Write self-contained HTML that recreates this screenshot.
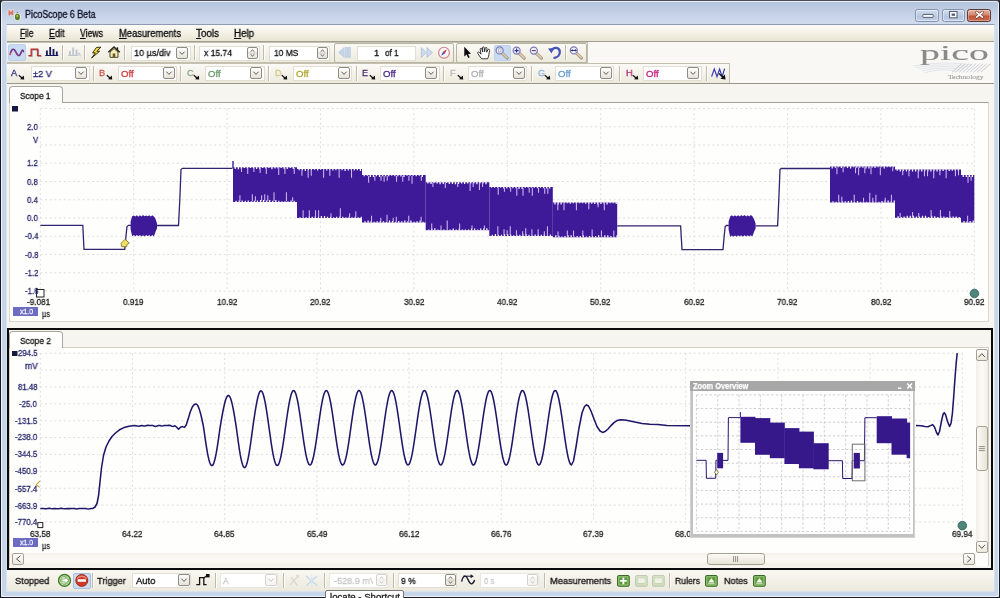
<!DOCTYPE html><html><head><meta charset="utf-8"><title>PicoScope 6 Beta</title><style>
*{box-sizing:border-box;margin:0;padding:0}
html,body{width:1000px;height:598px;overflow:hidden}
body{position:relative;font-family:"Liberation Sans",sans-serif;font-size:10px;color:#000;background:#33333c}
.a{position:absolute}
.t{position:absolute;white-space:nowrap;line-height:1;transform-origin:0 0;-webkit-text-stroke:0.3px;will-change:transform}
#frame{left:0;top:0;width:1000px;height:598px;border:1px solid #1a1a22;border-top-color:#4c4c56;border-radius:4px 4px 0 0;background:linear-gradient(#b3c2da 0,#bccae1 6px,#c6d3e8 14px,#d1dcee 24px,#c7d5ea 44px,#c7d5ea 100%)}
#frameHi{left:1px;top:1px;width:998px;height:596px;border:1px solid rgba(255,255,255,.7);border-radius:3px}
#client{left:7px;top:25px;width:987px;height:566px;background:#f6f5ef}
#clientEdge{left:6px;top:24px;width:989px;height:568px;border:1px solid #d9e2f0;border-top-color:#8f9bb2}
#menubar{left:7px;width:987px;top:25px;height:17px;background:linear-gradient(#fcfbf7,#f4f1e6 50%,#e9e5d4);border-bottom:1px solid #a29e90}
.strip{position:absolute;background:linear-gradient(#fbfaf6,#edeadd);border:1px solid #c4c0b0;border-left:none}
.grp{position:absolute;border:1px solid #b4b1a2;border-radius:2px;background:linear-gradient(#f7f5ee,#ebe8da)}
.inp{position:absolute;background:#fff;border:1px solid #e2dfd2}
.dd{position:absolute;width:12px;height:12px;border:1px solid #8c8b84;border-radius:2px;background:linear-gradient(#fefefc,#e6e3d8)}
.dd svg,.sp svg{position:absolute;left:0;top:0}
.sp{position:absolute;width:11px;height:12px;border:1px solid #8c8b84;border-radius:2px;background:linear-gradient(#fefefc,#e6e3d8)}
.sep{position:absolute;width:1px;background:#bfbcae;box-shadow:1px 0 0 #fdfdfa}
.hl{position:absolute;background:#c9dbf1;border:1px solid #bdd1ec;border-radius:2px}
.panel{position:absolute;background:#fefefd;border:1px solid #d9d6ca;border-top-color:#a3a196}
.tab{position:absolute;background:linear-gradient(#ffffff,#fdfdfb);border:1px solid #a9a799;border-bottom:none;border-radius:4px 4px 0 0}
.dis{opacity:.38}
</style></head><body>
<div class="a" id="frame"></div><div class="a" id="frameHi"></div><div class="a" id="clientEdge"></div><div class="a" id="client"></div>
<div class="t" style="left:24.50px;top:10.23px;font-size:10px;color:#0c0c22;transform:scaleX(0.8868);">PicoScope 6 Beta</div>
<svg class="a" style="left:7px;top:7px" width="16" height="15" viewBox="7 7 16 15"><path d="M9.2 15.4 V10.8 L10.9 14 L12.6 10.6 V15" fill="none" stroke="#f4ecf0" stroke-width="3" stroke-linejoin="round" opacity="0.8"/><path d="M9.2 15.4 V10.8 L10.9 14 L12.6 10.6 V15" fill="none" stroke="#d9766a" stroke-width="1.6" stroke-linejoin="round"/><ellipse cx="17.4" cy="16.8" rx="3.4" ry="4.1" fill="#eef0f4" opacity="0.85"/><ellipse cx="17.4" cy="17" rx="2.5" ry="3.2" fill="#5d7d22"/><ellipse cx="17.2" cy="16" rx="1" ry="1.2" fill="#a9c552"/><path d="M16.6 13 C17.2 12.2,18 12.4,18.4 13.2" fill="none" stroke="#5a5a4a" stroke-width="0.9"/></svg>
<div class="a" style="left:914.5px;top:8.5px;width:24.2px;height:13px;border:1px solid #8493ae;border-radius:2.5px;background:linear-gradient(#d0dcee,#bccbe3 50%,#b1c2dd 51%,#c3d1e6);box-shadow:inset 0 0 0 1px rgba(255,255,255,.45)"></div>
<div class="a" style="left:941.6px;top:8.5px;width:23.8px;height:13px;border:1px solid #8493ae;border-radius:2.5px;background:linear-gradient(#d0dcee,#bccbe3 50%,#b1c2dd 51%,#c3d1e6);box-shadow:inset 0 0 0 1px rgba(255,255,255,.45)"></div>
<div class="a" style="left:967.2px;top:8.5px;width:24.3px;height:13px;border:1px solid #5a3a36;border-radius:2.5px;background:linear-gradient(#e2b0a0,#d48870 45%,#be543c 55%,#cb6e52);box-shadow:inset 0 0 0 1px rgba(255,255,255,.3)"></div>
<svg class="a" style="left:914px;top:8px" width="80" height="15" viewBox="914 8 80 15"><rect x="922.8" y="14.4" width="10.4" height="3" rx="0.8" fill="#fff" stroke="#4d5a73" stroke-width="1"/><rect x="949.6" y="11.4" width="7.4" height="6.4" fill="#fff" stroke="#4d5a73" stroke-width="1"/><rect x="951.6" y="13.6" width="3.4" height="2.2" fill="#4d5a73"/><path d="M976.6 12.4 L982.4 17.2 M982.4 12.4 L976.6 17.2" stroke="#7a3a2e" stroke-width="2.9" stroke-linecap="round"/><path d="M976.6 12.4 L982.4 17.2 M982.4 12.4 L976.6 17.2" stroke="#fff" stroke-width="1.7" stroke-linecap="round"/></svg>
<div class="a" id="menubar"></div>
<div class="t" style="left:19.50px;top:28.83px;font-size:10px;color:#0a0a0a;transform:scaleX(0.8378);text-decoration-thickness:0.7px;text-underline-offset:0.5px;"><u>F</u>ile</div>
<div class="t" style="left:48.50px;top:28.83px;font-size:10px;color:#0a0a0a;transform:scaleX(0.8995);text-decoration-thickness:0.7px;text-underline-offset:0.5px;"><u>E</u>dit</div>
<div class="t" style="left:80.00px;top:28.83px;font-size:10px;color:#0a0a0a;transform:scaleX(0.8681);text-decoration-thickness:0.7px;text-underline-offset:0.5px;"><u>V</u>iews</div>
<div class="t" style="left:119.00px;top:28.83px;font-size:10px;color:#0a0a0a;transform:scaleX(0.9374);text-decoration-thickness:0.7px;text-underline-offset:0.5px;"><u>M</u>easurements</div>
<div class="t" style="left:196.00px;top:28.83px;font-size:10px;color:#0a0a0a;transform:scaleX(0.9852);text-decoration-thickness:0.7px;text-underline-offset:0.5px;"><u>T</u>ools</div>
<div class="t" style="left:234.00px;top:28.83px;font-size:10px;color:#0a0a0a;transform:scaleX(0.9724);text-decoration-thickness:0.7px;text-underline-offset:0.5px;"><u>H</u>elp</div>
<div class="a" style="left:7px;top:42px;width:987px;height:42px;background:#f9f8f4"></div>
<div class="strip" style="left:7px;top:42px;width:581px;height:21px"></div>
<div class="strip" style="left:7px;top:62.6px;width:722.5px;height:21.4px"></div>
<div class="a" style="left:7px;top:83px;width:987px;height:1px;background:#98958a"></div>
<div class="hl" style="left:8px;top:44px;width:18px;height:17px"></div>
<svg class="a" style="left:0;top:42px" width="600" height="22" viewBox="0 42 600 22">
<path d="M9.8 55 C11.4 49,13.6 47.6,15.4 51.4 S19 57.4,20.6 53.4 S22.6 50.4,23.4 50.8" fill="none" stroke="#c8425a" stroke-width="1.5"/>
<path d="M10.6 52.6 C12.2 48,14.4 48.2,16.2 52.6 S19.8 56.6,21.4 52.2 S23 50.6,23.8 52.2" fill="none" stroke="#5a3aa4" stroke-width="1.2"/>
<path d="M28.3 55.6 H31.2 V49.2 H37.6 V55.6 H41" fill="none" stroke="#a58ab4" stroke-width="1.1" transform="translate(0.9,0.7)"/>
<path d="M28.3 55.6 H31.2 V49.2 H37.6 V55.6 H41" fill="none" stroke="#b93434" stroke-width="1.4"/>
<g fill="#17175c"><rect x="46" y="50.5" width="1.8" height="5"/><rect x="49.3" y="47" width="1.8" height="8.5"/><rect x="52.6" y="49" width="1.8" height="6.5"/><rect x="55.9" y="51.5" width="1.8" height="4"/><rect x="45.3" y="55" width="13" height="1"/></g>
<g fill="#bfc3cc"><rect x="69" y="51" width="1.8" height="4.5"/><rect x="72.3" y="47.5" width="1.8" height="8"/><rect x="75.6" y="49.5" width="1.8" height="6"/><rect x="68.3" y="55" width="10" height="1"/><path d="M76 52 l5 5 l-1 -4z" fill="#c9ccd3"/></g>
<path d="M100.9 47.1 L96.4 47.5 L92.6 52.9 L95.4 52.9 L91.6 58 L99.6 51.3 L96.9 51.3 Z" fill="#f4dc3c" stroke="#2e2806" stroke-width="0.95" stroke-linejoin="round"/>
<path d="M108.3 52.3 L114 47 L119.8 52.3" fill="none" stroke="#2a2a1a" stroke-width="1.5"/>
<path d="M110 52 L114 48.6 L118 52 V57.3 H110 Z" fill="#f6eeb6" stroke="#3a3618" stroke-width="0.9"/>
<rect x="112.7" y="53.5" width="2.6" height="3.8" fill="#6a5a2a"/><rect x="116.6" y="47.3" width="1.6" height="3" fill="#2a2a1a"/>
<g fill="#c3d5ea" stroke="#b2c7e0" stroke-width="0.6"><path d="M344.2 47.5 L338.5 52.5 L344.2 57.5 Z"/><rect x="345.6" y="47.5" width="1.9" height="10"/><rect x="348.4" y="47.5" width="1.9" height="10"/></g>
<g fill="#cfdcee" stroke="#a9bfdc" stroke-width="0.8"><path d="M421.4 47.6 L426.2 52.5 L421.4 57.4 Z"/><path d="M427 47.6 L432.4 52.5 L427 57.4 Z"/></g>
<circle cx="444" cy="52.7" r="5.4" fill="#fbf4f4" stroke="#cf7f8d" stroke-width="1.1"/><path d="M446.8 49.6 L444.9 53.6 L443.1 51.8 Z" fill="#c03050"/><path d="M441.2 55.8 L443.1 51.8 L444.9 53.6 Z" fill="#3a4ab0"/>
<path d="M464.3 46.8 V56.6 L466.6 54.5 L468.2 58 L469.7 57.3 L468.1 53.9 L471 53.7 Z" fill="#0a0a0a"/>
<path d="M481.6 58.8 C480 56.8,478.8 55,477.8 53.4 C477.2 52.2,478.6 51.4,479.6 52.5 L481 54.2 L480.2 49.4 C480 48.1,481.6 47.7,481.9 49 L482.7 52 L482.5 47.9 C482.5 46.5,484.2 46.5,484.3 47.9 L484.6 51.7 L485.3 48.2 C485.6 46.9,487.2 47.2,487 48.6 L486.6 52.2 L487.9 49.8 C488.5 48.7,490 49.4,489.6 50.6 C488.9 53.2,489 56.4,487.6 58.8 Z" fill="#fff" stroke="#161616" stroke-width="0.85" stroke-linejoin="round"/>
</svg>
<div class="hl" style="left:493.5px;top:44.5px;width:17.5px;height:16.5px"></div>
<svg class="a" style="left:490px;top:42px" width="110" height="22" viewBox="490 42 110 22">
<path d="M502.0 53.0 L507.20000000000005 58.0" stroke="#9a8a7a" stroke-width="3.1" stroke-linecap="round"/><path d="M502.0 52.8 L507.0 57.6" stroke="#dcc8aa" stroke-width="1.9" stroke-linecap="round"/><circle cx="499.6" cy="50.4" r="3.5" fill="#eef2fb" stroke="#7a7ab4" stroke-width="1.25"/><rect x="498.3" y="48.8" width="2.6" height="3.2" fill="#fff" stroke="#8a9ac4" stroke-width="0.7"/>
<path d="M519.0 53.2 L524.2 58.2" stroke="#9a8a7a" stroke-width="3.1" stroke-linecap="round"/><path d="M519.0 53.0 L524.0 57.800000000000004" stroke="#dcc8aa" stroke-width="1.9" stroke-linecap="round"/><circle cx="516.6" cy="50.6" r="3.5" fill="#eef2fb" stroke="#7a7ab4" stroke-width="1.25"/><path d="M514.6 50.6 H518.6 M516.6 48.6 V52.6" stroke="#3a2a9a" stroke-width="1.2"/>
<path d="M536.1999999999999 53.2 L541.4 58.2" stroke="#9a8a7a" stroke-width="3.1" stroke-linecap="round"/><path d="M536.1999999999999 53.0 L541.1999999999999 57.800000000000004" stroke="#dcc8aa" stroke-width="1.9" stroke-linecap="round"/><circle cx="533.8" cy="50.6" r="3.5" fill="#eef2fb" stroke="#7a7ab4" stroke-width="1.25"/><path d="M531.8 50.6 H535.8" stroke="#7a3a6a" stroke-width="1.2"/>
<path d="M576.1999999999999 53.0 L581.4 58.0" stroke="#9a8a7a" stroke-width="3.1" stroke-linecap="round"/><path d="M576.1999999999999 52.8 L581.1999999999999 57.6" stroke="#dcc8aa" stroke-width="1.9" stroke-linecap="round"/><circle cx="573.8" cy="50.4" r="3.5" fill="#eef2fb" stroke="#7a7ab4" stroke-width="1.25"/><path d="M571.1999999999999 50.4 h5.2" stroke="#2a2a6a" stroke-width="1"/><path d="M571.0 50.4 l1.5 -1.4 v2.8z M576.5999999999999 50.4 l-1.5 -1.4 v2.8z" fill="#2a2a6a"/>
<path d="M551.6 50.6 C553.6 46.6,559.4 46.8,559.8 51.6 C560 55,557.6 57.4,554.4 57.8" fill="none" stroke="#4353b8" stroke-width="2.3" stroke-linecap="round"/><path d="M548 48.6 L553.6 48 L551.6 53.6 Z" fill="#4353b8"/>
</svg>
<div class="sep" style="left:62px;top:45px;height:15px"></div>
<div class="sep" style="left:84px;top:45px;height:15px"></div>
<div class="sep" style="left:124px;top:45px;height:15px"></div>
<div class="sep" style="left:194px;top:45px;height:15px"></div>
<div class="sep" style="left:263px;top:45px;height:15px"></div>
<div class="sep" style="left:565px;top:45px;height:15px"></div>
<div class="inp" style="left:131px;top:45.5px;width:60px;height:15px"></div>
<div class="t" style="left:134.00px;top:48.36px;font-size:9.5px;color:#111;transform:scaleX(0.9552);">10 µs/div</div>
<div class="dd" style="left:176.2px;top:46.5px"><svg width="10" height="10" viewBox="0 0 10 10"><path d="M2.4 3.7 L5 6.4 L7.6 3.7" fill="none" stroke="#505050" stroke-width="0.95"/></svg></div>
<div class="inp" style="left:199px;top:45.5px;width:60.5px;height:15px"></div>
<div class="t" style="left:203.90px;top:48.36px;font-size:9.5px;color:#111;transform:scaleX(0.8953);">x 15.74</div>
<div class="sp" style="left:247px;top:46.8px"><svg width="9" height="10" viewBox="0 0 9 10"><path d="M2.6 3.7 L4.5 2 L6.4 3.7 M2.6 6.3 L4.5 8 L6.4 6.3" fill="none" stroke="#4a4a46" stroke-width="0.9"/><path d="M0 5 H9" stroke="#c9c6ba" stroke-width="0.8"/></svg></div>
<div class="inp" style="left:269px;top:45.5px;width:60.5px;height:15px"></div>
<div class="t" style="left:273.60px;top:48.36px;font-size:9.5px;color:#111;transform:scaleX(0.8850);">10 MS</div>
<div class="sp" style="left:316.5px;top:46.8px"><svg width="9" height="10" viewBox="0 0 9 10"><path d="M2.6 3.7 L4.5 2 L6.4 3.7 M2.6 6.3 L4.5 8 L6.4 6.3" fill="none" stroke="#4a4a46" stroke-width="0.9"/><path d="M0 5 H9" stroke="#c9c6ba" stroke-width="0.8"/></svg></div>
<div class="a" style="left:333.5px;top:43px;width:120.5px;height:19.5px;border:1px solid #b7b4a5;border-radius:2px"></div>
<div class="inp" style="left:356.5px;top:45.5px;width:59.5px;height:15px"></div>
<div class="t" style="left:374.00px;top:48.36px;font-size:9.5px;color:#111;transform:scaleX(0.9842);">1</div>
<div class="t" style="left:384.60px;top:48.36px;font-size:9.5px;color:#111;transform:scaleX(0.8646);">of 1</div>
<div class="a" style="left:456px;top:43px;width:130.5px;height:19.5px;border:1px solid #b7b4a5;border-radius:2px"></div>
<div class="t" style="left:11.40px;top:68.36px;font-size:9.5px;color:#2b2b7c;transform:scaleX(0.9500);">A</div>
<svg class="a" style="left:16.9px;top:72.5px" width="9" height="8" viewBox="0 0 9 8"><path d="M1.8 2.2 L5 5" stroke="#111" stroke-width="1.2"/><path d="M7.2 6.6 L3 6.2 L6.8 2.6 Z" fill="#111"/></svg>
<div class="inp" style="left:30.5px;top:66px;width:59.3px;height:14.5px"></div>
<div class="t" style="left:33.20px;top:69.16px;font-size:9.5px;color:#23236e;transform:scaleX(0.9654);">±2 V</div>
<div class="dd" style="left:75.3px;top:67px"><svg width="10" height="10" viewBox="0 0 10 10"><path d="M2.4 3.7 L5 6.4 L7.6 3.7" fill="none" stroke="#505050" stroke-width="0.95"/></svg></div>
<div class="sep" style="left:92.6px;top:66px;height:15px"></div>
<div class="t" style="left:99.14px;top:68.36px;font-size:9.5px;color:#d05050;transform:scaleX(0.9500);">B</div>
<svg class="a" style="left:104.6px;top:72.5px" width="9" height="8" viewBox="0 0 9 8"><path d="M1.8 2.2 L5 5" stroke="#111" stroke-width="1.2"/><path d="M7.2 6.6 L3 6.2 L6.8 2.6 Z" fill="#111"/></svg>
<div class="inp" style="left:117.9px;top:66px;width:59.3px;height:14.5px"></div>
<div class="t" style="left:120.94px;top:69.16px;font-size:9.5px;color:#d03a3a;transform:scaleX(1.0083);">Off</div>
<div class="dd" style="left:162.7px;top:67px"><svg width="10" height="10" viewBox="0 0 10 10"><path d="M2.4 3.7 L5 6.4 L7.6 3.7" fill="none" stroke="#505050" stroke-width="0.95"/></svg></div>
<div class="sep" style="left:180.3px;top:66px;height:15px"></div>
<div class="t" style="left:186.88px;top:68.36px;font-size:9.5px;color:#8aa58a;transform:scaleX(0.9500);">C</div>
<svg class="a" style="left:192.4px;top:72.5px" width="9" height="8" viewBox="0 0 9 8"><path d="M1.8 2.2 L5 5" stroke="#111" stroke-width="1.2"/><path d="M7.2 6.6 L3 6.2 L6.8 2.6 Z" fill="#111"/></svg>
<div class="inp" style="left:205.4px;top:66px;width:59.3px;height:14.5px"></div>
<div class="t" style="left:208.38px;top:69.16px;font-size:9.5px;color:#6c9a6c;transform:scaleX(1.0083);">Off</div>
<div class="dd" style="left:250.2px;top:67px"><svg width="10" height="10" viewBox="0 0 10 10"><path d="M2.4 3.7 L5 6.4 L7.6 3.7" fill="none" stroke="#505050" stroke-width="0.95"/></svg></div>
<div class="sep" style="left:267.9px;top:66px;height:15px"></div>
<div class="t" style="left:274.62px;top:68.36px;font-size:9.5px;color:#cfc88a;transform:scaleX(0.9500);">D</div>
<svg class="a" style="left:280.1px;top:72.5px" width="9" height="8" viewBox="0 0 9 8"><path d="M1.8 2.2 L5 5" stroke="#111" stroke-width="1.2"/><path d="M7.2 6.6 L3 6.2 L6.8 2.6 Z" fill="#111"/></svg>
<div class="inp" style="left:292.8px;top:66px;width:59.3px;height:14.5px"></div>
<div class="t" style="left:295.82px;top:69.16px;font-size:9.5px;color:#b4a636;transform:scaleX(1.0083);">Off</div>
<div class="dd" style="left:337.6px;top:67px"><svg width="10" height="10" viewBox="0 0 10 10"><path d="M2.4 3.7 L5 6.4 L7.6 3.7" fill="none" stroke="#505050" stroke-width="0.95"/></svg></div>
<div class="sep" style="left:355.6px;top:66px;height:15px"></div>
<div class="t" style="left:362.36px;top:68.36px;font-size:9.5px;color:#4b2d78;transform:scaleX(0.9500);">E</div>
<svg class="a" style="left:367.9px;top:72.5px" width="9" height="8" viewBox="0 0 9 8"><path d="M1.8 2.2 L5 5" stroke="#111" stroke-width="1.2"/><path d="M7.2 6.6 L3 6.2 L6.8 2.6 Z" fill="#111"/></svg>
<div class="inp" style="left:380.3px;top:66px;width:59.3px;height:14.5px"></div>
<div class="t" style="left:383.26px;top:69.16px;font-size:9.5px;color:#4a2a86;transform:scaleX(1.0083);">Off</div>
<div class="dd" style="left:425.1px;top:67px"><svg width="10" height="10" viewBox="0 0 10 10"><path d="M2.4 3.7 L5 6.4 L7.6 3.7" fill="none" stroke="#505050" stroke-width="0.95"/></svg></div>
<div class="sep" style="left:443.2px;top:66px;height:15px"></div>
<div class="t" style="left:450.10px;top:68.36px;font-size:9.5px;color:#b9b9b9;transform:scaleX(0.9500);">F</div>
<svg class="a" style="left:455.6px;top:72.5px" width="9" height="8" viewBox="0 0 9 8"><path d="M1.8 2.2 L5 5" stroke="#111" stroke-width="1.2"/><path d="M7.2 6.6 L3 6.2 L6.8 2.6 Z" fill="#111"/></svg>
<div class="inp" style="left:467.7px;top:66px;width:59.3px;height:14.5px"></div>
<div class="t" style="left:470.70px;top:69.16px;font-size:9.5px;color:#b0b0b0;transform:scaleX(1.0083);">Off</div>
<div class="dd" style="left:512.5px;top:67px"><svg width="10" height="10" viewBox="0 0 10 10"><path d="M2.4 3.7 L5 6.4 L7.6 3.7" fill="none" stroke="#505050" stroke-width="0.95"/></svg></div>
<div class="sep" style="left:530.9px;top:66px;height:15px"></div>
<div class="t" style="left:537.84px;top:68.36px;font-size:9.5px;color:#8ab2dc;transform:scaleX(0.9500);">G</div>
<svg class="a" style="left:543.3px;top:72.5px" width="9" height="8" viewBox="0 0 9 8"><path d="M1.8 2.2 L5 5" stroke="#111" stroke-width="1.2"/><path d="M7.2 6.6 L3 6.2 L6.8 2.6 Z" fill="#111"/></svg>
<div class="inp" style="left:555.1px;top:66px;width:59.3px;height:14.5px"></div>
<div class="t" style="left:558.14px;top:69.16px;font-size:9.5px;color:#6a9cd4;transform:scaleX(1.0083);">Off</div>
<div class="dd" style="left:599.9px;top:67px"><svg width="10" height="10" viewBox="0 0 10 10"><path d="M2.4 3.7 L5 6.4 L7.6 3.7" fill="none" stroke="#505050" stroke-width="0.95"/></svg></div>
<div class="sep" style="left:618.6px;top:66px;height:15px"></div>
<div class="t" style="left:625.58px;top:68.36px;font-size:9.5px;color:#b32672;transform:scaleX(0.9500);">H</div>
<svg class="a" style="left:631.1px;top:72.5px" width="9" height="8" viewBox="0 0 9 8"><path d="M1.8 2.2 L5 5" stroke="#111" stroke-width="1.2"/><path d="M7.2 6.6 L3 6.2 L6.8 2.6 Z" fill="#111"/></svg>
<div class="inp" style="left:642.6px;top:66px;width:59.3px;height:14.5px"></div>
<div class="t" style="left:645.58px;top:69.16px;font-size:9.5px;color:#c3207e;transform:scaleX(1.0083);">Off</div>
<div class="dd" style="left:687.4px;top:67px"><svg width="10" height="10" viewBox="0 0 10 10"><path d="M2.4 3.7 L5 6.4 L7.6 3.7" fill="none" stroke="#505050" stroke-width="0.95"/></svg></div>
<div class="sep" style="left:706.2px;top:66px;height:15px"></div>
<svg class="a" style="left:710px;top:66px" width="18" height="15" viewBox="710 66 18 15"><path d="M711.6 76.6 L714.3 69 L717 76.6 L719.6 69 L722.2 76.6 L724.6 68.6" fill="none" stroke="#3a3ab0" stroke-width="1.2"/><path d="M719 73.5 L723 77.3" stroke="#111" stroke-width="1.4"/><path d="M725.6 79.6 L720.4 78.8 L724.8 74.4 Z" fill="#111"/></svg>
<svg class="a" style="left:905px;top:58px" width="90" height="20" viewBox="905 58 90 20">
<path d="M913 66.0 C935 62.5,950 62.0,972 65.0" fill="none" stroke="#dfe3ea" stroke-width="0.9"/>
<path d="M916 67.7 C935 64.2,950 63.7,968 66.7" fill="none" stroke="#dfe3ea" stroke-width="0.9"/>
<path d="M919 69.4 C935 65.9,950 65.4,964 68.4" fill="none" stroke="#dfe3ea" stroke-width="0.9"/>
<path d="M922 71.1 C935 67.6,950 67.1,960 70.1" fill="none" stroke="#dfe3ea" stroke-width="0.9"/>
<path d="M925 72.8 C935 69.3,950 68.8,956 71.8" fill="none" stroke="#dfe3ea" stroke-width="0.9"/>
<path d="M952.0 72.3 L961.5 63.8" stroke="#c3c6cf" stroke-width="0.9"/>
<path d="M955.6 72.3 L965.1 63.8" stroke="#c3c6cf" stroke-width="0.9"/>
<path d="M959.2 72.3 L968.7 63.8" stroke="#c3c6cf" stroke-width="0.9"/>
<path d="M962.8 72.3 L972.3 63.8" stroke="#c3c6cf" stroke-width="0.9"/>
<path d="M966.4 72.3 L975.9 63.8" stroke="#c3c6cf" stroke-width="0.9"/>
<path d="M970.0 72.3 L979.5 63.8" stroke="#c3c6cf" stroke-width="0.9"/>
<path d="M973.6 72.3 L983.1 63.8" stroke="#c3c6cf" stroke-width="0.9"/>
<path d="M977.2 72.3 L986.7 63.8" stroke="#c3c6cf" stroke-width="0.9"/>
<path d="M980.8 72.3 L990.3 63.8" stroke="#c3c6cf" stroke-width="0.9"/>
</svg>
<div class="t" style="left:919.6px;top:42.8px;font-family:'Liberation Serif',serif;font-size:21px;letter-spacing:0.1px;color:#8a8a8a;transform:scaleX(1.89);-webkit-text-stroke:0.1px">pico</div>
<div class="t" style="left:948.20px;top:73.87px;font-size:6.6px;color:#9c9c9c;font-family:'Liberation Serif',serif;transform:scaleX(1.1461);-webkit-text-stroke:0.1px">Technology</div>
<div class="panel" style="left:9px;top:102px;width:980px;height:220px"></div>
<div class="tab" style="left:9px;top:86px;width:54px;height:17px"></div>
<div class="t" style="left:19.50px;top:91.26px;font-size:9.5px;color:#141414;transform:scaleX(0.8749);">Scope 1</div>
<div class="a" style="left:7px;top:328px;width:986px;height:242.3px;border:2px solid #0a0a0a;background:#f6f5ef"></div>
<div class="panel" style="left:9px;top:347px;width:980px;height:219px;border-color:#d2cfc2"></div>
<div class="tab" style="left:9px;top:331px;width:54px;height:17px"></div>
<div class="t" style="left:19.50px;top:335.76px;font-size:9.5px;color:#141414;transform:scaleX(0.8893);">Scope 2</div>
<svg class="a" style="left:0;top:0" width="1000" height="598" viewBox="0 0 1000 598">
<g stroke="#dedee4" stroke-width="1" stroke-dasharray="2 2.7" fill="none"><line x1="40.30" y1="108.5" x2="40.30" y2="291.0"/><line x1="40.3" y1="108.50" x2="974.3" y2="108.50"/><line x1="133.70" y1="108.5" x2="133.70" y2="291.0"/><line x1="40.3" y1="126.75" x2="974.3" y2="126.75"/><line x1="227.10" y1="108.5" x2="227.10" y2="291.0"/><line x1="40.3" y1="145.00" x2="974.3" y2="145.00"/><line x1="320.50" y1="108.5" x2="320.50" y2="291.0"/><line x1="40.3" y1="163.25" x2="974.3" y2="163.25"/><line x1="413.90" y1="108.5" x2="413.90" y2="291.0"/><line x1="40.3" y1="181.50" x2="974.3" y2="181.50"/><line x1="507.30" y1="108.5" x2="507.30" y2="291.0"/><line x1="40.3" y1="199.75" x2="974.3" y2="199.75"/><line x1="600.70" y1="108.5" x2="600.70" y2="291.0"/><line x1="40.3" y1="218.00" x2="974.3" y2="218.00"/><line x1="694.10" y1="108.5" x2="694.10" y2="291.0"/><line x1="40.3" y1="236.25" x2="974.3" y2="236.25"/><line x1="787.50" y1="108.5" x2="787.50" y2="291.0"/><line x1="40.3" y1="254.50" x2="974.3" y2="254.50"/><line x1="880.90" y1="108.5" x2="880.90" y2="291.0"/><line x1="40.3" y1="272.75" x2="974.3" y2="272.75"/><line x1="974.30" y1="108.5" x2="974.30" y2="291.0"/><line x1="40.3" y1="291.00" x2="974.3" y2="291.00"/></g>
<g stroke="#dedee4" stroke-width="1" stroke-dasharray="2 2.7" fill="none"><line x1="40.30" y1="353.2" x2="40.30" y2="522.0"/><line x1="40.3" y1="353.20" x2="962.3" y2="353.20"/><line x1="132.50" y1="353.2" x2="132.50" y2="522.0"/><line x1="40.3" y1="370.08" x2="962.3" y2="370.08"/><line x1="224.70" y1="353.2" x2="224.70" y2="522.0"/><line x1="40.3" y1="386.96" x2="962.3" y2="386.96"/><line x1="316.90" y1="353.2" x2="316.90" y2="522.0"/><line x1="40.3" y1="403.84" x2="962.3" y2="403.84"/><line x1="409.10" y1="353.2" x2="409.10" y2="522.0"/><line x1="40.3" y1="420.72" x2="962.3" y2="420.72"/><line x1="501.30" y1="353.2" x2="501.30" y2="522.0"/><line x1="40.3" y1="437.60" x2="962.3" y2="437.60"/><line x1="593.50" y1="353.2" x2="593.50" y2="522.0"/><line x1="40.3" y1="454.48" x2="962.3" y2="454.48"/><line x1="685.70" y1="353.2" x2="685.70" y2="522.0"/><line x1="40.3" y1="471.36" x2="962.3" y2="471.36"/><line x1="777.90" y1="353.2" x2="777.90" y2="522.0"/><line x1="40.3" y1="488.24" x2="962.3" y2="488.24"/><line x1="870.10" y1="353.2" x2="870.10" y2="522.0"/><line x1="40.3" y1="505.12" x2="962.3" y2="505.12"/><line x1="962.30" y1="353.2" x2="962.30" y2="522.0"/><line x1="40.3" y1="522.00" x2="962.3" y2="522.00"/></g>
<path d="M40.3 225.3 L82.8 225.3 L84.0 249.3 L124.8 249.3 L126.0 236.0 L127.0 226.5 L128.5 225.3 L131.0 225.3" fill="none" stroke="#33226f" stroke-width="1.3"/>
<path d="M156.5 225.5 L178.5 225.5 L179.8 200.0 L181.0 169.5 L182.5 168.3 L232.5 168.3" fill="none" stroke="#33226f" stroke-width="1.3"/>
<path d="M617.2 225.8 L680.6 225.8 L682.0 249.6 L723.0 249.6 L724.2 236.0 L725.2 226.5 L726.5 225.5 L728.8 225.5" fill="none" stroke="#33226f" stroke-width="1.3"/>
<path d="M755.5 225.8 L777.6 225.8 L778.8 200.0 L780.0 169.5 L781.2 168.5 L830.0 168.5" fill="none" stroke="#33226f" stroke-width="1.3"/>
<path d="M130.6 221.5 L132.2 216.3 L133.7 215.4 L135.3 216.6 L136.8 215.3 L138.4 216.7 L139.9 215.2 L141.5 216.6 L143.0 215.1 L144.6 216.3 L146.1 215.4 L147.7 216.3 L149.2 215.3 L150.8 216.5 L152.3 215.3 L153.9 216.6 L155.4 218.6 L157.0 223.5 L157.0 228.5 L155.4 232.1 L153.9 236.5 L152.3 235.0 L150.8 236.5 L149.2 234.9 L147.7 236.3 L146.1 234.9 L144.6 236.6 L143.0 235.3 L141.5 236.4 L139.9 235.1 L138.4 236.3 L136.8 235.0 L135.3 236.3 L133.7 235.1 L132.2 236.3 L130.6 229.5Z" fill="#3f1a98"/>
<path d="M728.6 221.5 L730.2 216.5 L731.8 215.2 L733.4 216.6 L735.0 215.3 L736.5 216.5 L738.1 215.2 L739.7 216.4 L741.3 215.0 L742.9 216.2 L744.5 215.1 L746.1 216.5 L747.7 215.2 L749.2 216.5 L750.8 215.1 L752.4 216.2 L754.0 218.9 L755.6 223.5 L755.6 228.5 L754.0 232.1 L752.4 236.5 L750.8 235.3 L749.2 236.5 L747.7 235.3 L746.1 236.5 L744.5 235.2 L742.9 236.7 L741.3 235.3 L739.7 236.6 L738.1 235.2 L736.5 236.7 L735.0 235.5 L733.4 236.8 L731.8 235.4 L730.2 236.9 L728.6 229.7Z" fill="#3f1a98"/>
<rect x="233" y="167.3" width="64.0" height="34.7" fill="#3f1a98"/>
<path d="M234.6 167.1 v1.8 h1.25 v-1.8zM237.7 167.1 v2.2 h1.25 v-2.2zM240.7 167.1 v1.8 h1.25 v-1.8zM243.8 167.1 v1.0 h1.25 v-1.0zM246.8 167.1 v1.4 h1.25 v-1.4zM249.9 167.1 v1.0 h1.25 v-1.0zM253.0 167.1 v1.4 h1.25 v-1.4zM256.0 167.1 v1.8 h1.25 v-1.8zM259.1 167.1 v2.2 h1.25 v-2.2zM262.1 167.1 v1.0 h1.25 v-1.0zM265.2 167.1 v1.4 h1.25 v-1.4zM268.3 167.1 v1.0 h1.25 v-1.0zM271.3 167.1 v2.2 h1.25 v-2.2zM274.4 167.1 v1.4 h1.25 v-1.4zM277.4 167.1 v1.4 h1.25 v-1.4zM280.5 167.1 v1.0 h1.25 v-1.0zM283.6 167.1 v1.8 h1.25 v-1.8zM286.6 167.1 v1.8 h1.25 v-1.8zM289.7 167.1 v1.0 h1.25 v-1.0zM292.7 167.1 v1.8 h1.25 v-1.8zM235.4 202.2 v-1.4 h1.25 v1.4zM238.5 202.2 v-1.8 h1.25 v1.8zM241.5 202.2 v-1.8 h1.25 v1.8zM244.6 202.2 v-1.4 h1.25 v1.4zM247.6 202.2 v-1.8 h1.25 v1.8zM250.7 202.2 v-1.0 h1.25 v1.0zM253.8 202.2 v-1.4 h1.25 v1.4zM256.8 202.2 v-1.8 h1.25 v1.8zM259.9 202.2 v-2.2 h1.25 v2.2zM262.9 202.2 v-2.2 h1.25 v2.2zM266.0 202.2 v-1.8 h1.25 v1.8zM269.1 202.2 v-2.2 h1.25 v2.2zM272.1 202.2 v-1.4 h1.25 v1.4zM275.2 202.2 v-2.2 h1.25 v2.2zM278.2 202.2 v-1.4 h1.25 v1.4zM281.3 202.2 v-1.0 h1.25 v1.0zM284.4 202.2 v-1.0 h1.25 v1.0zM287.4 202.2 v-1.0 h1.25 v1.0zM290.5 202.2 v-1.8 h1.25 v1.8zM293.5 202.2 v-1.4 h1.25 v1.4z" fill="#fdfcff"/>
<path d="M241.0 168.1 v4 h1.05 v-4zM247.2 168.1 v6 h1.05 v-6zM253.4 168.1 v4 h1.05 v-4zM259.6 168.1 v5 h1.05 v-5zM265.8 168.1 v6 h1.05 v-6zM278.2 168.1 v7 h1.05 v-7zM284.4 168.1 v6 h1.05 v-6zM293.7 168.1 v6 h1.05 v-6zM239.4 201.2 v-6 h1.05 v6zM251.8 201.2 v-7 h1.05 v7zM254.9 201.2 v-5 h1.05 v5zM261.1 201.2 v-6 h1.05 v6zM264.2 201.2 v-7 h1.05 v7zM267.3 201.2 v-6 h1.05 v6zM273.5 201.2 v-9 h1.05 v9zM285.9 201.2 v-9 h1.05 v9zM292.1 201.2 v-4 h1.05 v4z" fill="#cdb9f0"/>
<rect x="297" y="169" width="65.0" height="49.0" fill="#3f1a98"/>
<path d="M298.6 168.8 v1.4 h1.25 v-1.4zM301.7 168.8 v1.4 h1.25 v-1.4zM304.7 168.8 v2.2 h1.25 v-2.2zM307.8 168.8 v1.4 h1.25 v-1.4zM310.8 168.8 v1.4 h1.25 v-1.4zM313.9 168.8 v1.0 h1.25 v-1.0zM317.0 168.8 v1.8 h1.25 v-1.8zM320.0 168.8 v1.0 h1.25 v-1.0zM323.1 168.8 v1.0 h1.25 v-1.0zM326.1 168.8 v1.8 h1.25 v-1.8zM329.2 168.8 v1.4 h1.25 v-1.4zM332.3 168.8 v1.8 h1.25 v-1.8zM335.3 168.8 v1.4 h1.25 v-1.4zM338.4 168.8 v1.0 h1.25 v-1.0zM341.4 168.8 v1.4 h1.25 v-1.4zM344.5 168.8 v2.2 h1.25 v-2.2zM347.6 168.8 v1.8 h1.25 v-1.8zM350.6 168.8 v1.4 h1.25 v-1.4zM353.7 168.8 v1.8 h1.25 v-1.8zM356.7 168.8 v1.4 h1.25 v-1.4zM359.8 168.8 v2.2 h1.25 v-2.2zM299.4 218.2 v-1.0 h1.25 v1.0zM302.5 218.2 v-1.0 h1.25 v1.0zM305.5 218.2 v-1.0 h1.25 v1.0zM308.6 218.2 v-1.8 h1.25 v1.8zM311.6 218.2 v-1.4 h1.25 v1.4zM314.7 218.2 v-2.2 h1.25 v2.2zM317.8 218.2 v-1.4 h1.25 v1.4zM320.8 218.2 v-2.2 h1.25 v2.2zM323.9 218.2 v-2.2 h1.25 v2.2zM326.9 218.2 v-1.4 h1.25 v1.4zM330.0 218.2 v-1.4 h1.25 v1.4zM333.1 218.2 v-1.0 h1.25 v1.0zM336.1 218.2 v-1.4 h1.25 v1.4zM339.2 218.2 v-1.8 h1.25 v1.8zM342.2 218.2 v-1.4 h1.25 v1.4zM345.3 218.2 v-1.0 h1.25 v1.0zM348.4 218.2 v-1.4 h1.25 v1.4zM351.4 218.2 v-1.0 h1.25 v1.0zM354.5 218.2 v-1.4 h1.25 v1.4zM357.5 218.2 v-1.0 h1.25 v1.0zM360.6 218.2 v-1.4 h1.25 v1.4z" fill="#fdfcff"/>
<path d="M301.4 169.8 v6 h1.05 v-6zM307.6 169.8 v8 h1.05 v-8zM310.7 169.8 v6 h1.05 v-6zM323.1 169.8 v8 h1.05 v-8zM329.3 169.8 v6 h1.05 v-6zM338.6 169.8 v8 h1.05 v-8zM351.0 169.8 v8 h1.05 v-8zM302.6 217.2 v-7 h1.05 v7zM308.8 217.2 v-7 h1.05 v7zM315.0 217.2 v-7 h1.05 v7zM318.1 217.2 v-7 h1.05 v7zM330.5 217.2 v-4 h1.05 v4zM339.8 217.2 v-9 h1.05 v9zM349.1 217.2 v-4 h1.05 v4zM355.3 217.2 v-6 h1.05 v6z" fill="#cdb9f0"/>
<rect x="362" y="175" width="63.7" height="47.5" fill="#3f1a98"/>
<path d="M363.6 174.8 v1.4 h1.25 v-1.4zM366.7 174.8 v1.0 h1.25 v-1.0zM369.7 174.8 v2.2 h1.25 v-2.2zM372.8 174.8 v2.2 h1.25 v-2.2zM375.8 174.8 v1.4 h1.25 v-1.4zM378.9 174.8 v2.2 h1.25 v-2.2zM382.0 174.8 v1.4 h1.25 v-1.4zM385.0 174.8 v1.4 h1.25 v-1.4zM388.1 174.8 v1.4 h1.25 v-1.4zM391.1 174.8 v1.0 h1.25 v-1.0zM394.2 174.8 v1.4 h1.25 v-1.4zM397.3 174.8 v1.4 h1.25 v-1.4zM400.3 174.8 v1.8 h1.25 v-1.8zM403.4 174.8 v2.2 h1.25 v-2.2zM406.4 174.8 v1.0 h1.25 v-1.0zM409.5 174.8 v1.0 h1.25 v-1.0zM412.6 174.8 v1.0 h1.25 v-1.0zM415.6 174.8 v1.4 h1.25 v-1.4zM418.7 174.8 v1.0 h1.25 v-1.0zM421.7 174.8 v2.2 h1.25 v-2.2zM364.4 222.7 v-1.4 h1.25 v1.4zM367.5 222.7 v-2.2 h1.25 v2.2zM370.5 222.7 v-1.8 h1.25 v1.8zM373.6 222.7 v-1.0 h1.25 v1.0zM376.6 222.7 v-1.4 h1.25 v1.4zM379.7 222.7 v-1.8 h1.25 v1.8zM382.8 222.7 v-1.4 h1.25 v1.4zM385.8 222.7 v-1.0 h1.25 v1.0zM388.9 222.7 v-2.2 h1.25 v2.2zM391.9 222.7 v-1.8 h1.25 v1.8zM395.0 222.7 v-1.0 h1.25 v1.0zM398.1 222.7 v-1.8 h1.25 v1.8zM401.1 222.7 v-1.4 h1.25 v1.4zM404.2 222.7 v-2.2 h1.25 v2.2zM407.2 222.7 v-1.4 h1.25 v1.4zM410.3 222.7 v-2.2 h1.25 v2.2zM413.4 222.7 v-1.0 h1.25 v1.0zM416.4 222.7 v-1.4 h1.25 v1.4zM419.5 222.7 v-2.2 h1.25 v2.2zM422.5 222.7 v-1.0 h1.25 v1.0z" fill="#fdfcff"/>
<path d="M368.1 175.8 v7 h1.05 v-7zM374.3 175.8 v5 h1.05 v-5zM380.5 175.8 v5 h1.05 v-5zM383.6 175.8 v6 h1.05 v-6zM386.7 175.8 v5 h1.05 v-5zM396.0 175.8 v6 h1.05 v-6zM402.2 175.8 v6 h1.05 v-6zM408.4 175.8 v5 h1.05 v-5zM411.5 175.8 v8 h1.05 v-8zM420.8 175.8 v5 h1.05 v-5zM371.0 221.7 v-6 h1.05 v6zM380.3 221.7 v-4 h1.05 v4zM386.5 221.7 v-7 h1.05 v7zM392.7 221.7 v-4 h1.05 v4zM395.8 221.7 v-5 h1.05 v5zM408.2 221.7 v-6 h1.05 v6zM420.6 221.7 v-5 h1.05 v5z" fill="#cdb9f0"/>
<rect x="425.7" y="182.3" width="63.6" height="47.9" fill="#3f1a98"/>
<path d="M427.3 182.1 v1.4 h1.25 v-1.4zM430.4 182.1 v1.8 h1.25 v-1.8zM433.4 182.1 v1.0 h1.25 v-1.0zM436.5 182.1 v1.4 h1.25 v-1.4zM439.5 182.1 v2.2 h1.25 v-2.2zM442.6 182.1 v1.8 h1.25 v-1.8zM445.7 182.1 v1.0 h1.25 v-1.0zM448.7 182.1 v1.8 h1.25 v-1.8zM451.8 182.1 v1.8 h1.25 v-1.8zM454.8 182.1 v2.2 h1.25 v-2.2zM457.9 182.1 v1.8 h1.25 v-1.8zM461.0 182.1 v1.4 h1.25 v-1.4zM464.0 182.1 v1.8 h1.25 v-1.8zM467.1 182.1 v1.4 h1.25 v-1.4zM470.1 182.1 v1.4 h1.25 v-1.4zM473.2 182.1 v1.4 h1.25 v-1.4zM476.3 182.1 v2.2 h1.25 v-2.2zM479.3 182.1 v1.4 h1.25 v-1.4zM482.4 182.1 v1.4 h1.25 v-1.4zM485.4 182.1 v2.2 h1.25 v-2.2zM428.1 230.4 v-1.0 h1.25 v1.0zM431.2 230.4 v-1.8 h1.25 v1.8zM434.2 230.4 v-2.2 h1.25 v2.2zM437.3 230.4 v-1.0 h1.25 v1.0zM440.3 230.4 v-1.0 h1.25 v1.0zM443.4 230.4 v-1.0 h1.25 v1.0zM446.5 230.4 v-1.0 h1.25 v1.0zM449.5 230.4 v-1.0 h1.25 v1.0zM452.6 230.4 v-1.8 h1.25 v1.8zM455.6 230.4 v-1.0 h1.25 v1.0zM458.7 230.4 v-1.8 h1.25 v1.8zM461.8 230.4 v-1.0 h1.25 v1.0zM464.8 230.4 v-1.0 h1.25 v1.0zM467.9 230.4 v-1.0 h1.25 v1.0zM470.9 230.4 v-1.8 h1.25 v1.8zM474.0 230.4 v-1.8 h1.25 v1.8zM477.1 230.4 v-1.0 h1.25 v1.0zM480.1 230.4 v-1.8 h1.25 v1.8zM483.2 230.4 v-1.8 h1.25 v1.8zM486.2 230.4 v-2.2 h1.25 v2.2z" fill="#fdfcff"/>
<path d="M432.4 183.1 v4 h1.05 v-4zM444.8 183.1 v5 h1.05 v-5zM457.2 183.1 v4 h1.05 v-4zM469.6 183.1 v8 h1.05 v-8zM472.7 183.1 v4 h1.05 v-4zM478.9 183.1 v7 h1.05 v-7zM482.0 183.1 v4 h1.05 v-4zM431.2 229.4 v-6 h1.05 v6zM440.5 229.4 v-4 h1.05 v4zM446.7 229.4 v-9 h1.05 v9zM459.1 229.4 v-6 h1.05 v6zM471.5 229.4 v-4 h1.05 v4zM483.9 229.4 v-4 h1.05 v4z" fill="#cdb9f0"/>
<rect x="489.3" y="187" width="63.5" height="49.0" fill="#3f1a98"/>
<path d="M490.9 186.8 v1.0 h1.25 v-1.0zM494.0 186.8 v1.0 h1.25 v-1.0zM497.0 186.8 v1.0 h1.25 v-1.0zM500.1 186.8 v1.0 h1.25 v-1.0zM503.1 186.8 v1.8 h1.25 v-1.8zM506.2 186.8 v1.8 h1.25 v-1.8zM509.3 186.8 v1.4 h1.25 v-1.4zM512.3 186.8 v1.4 h1.25 v-1.4zM515.4 186.8 v1.4 h1.25 v-1.4zM518.4 186.8 v2.2 h1.25 v-2.2zM521.5 186.8 v2.2 h1.25 v-2.2zM524.6 186.8 v1.0 h1.25 v-1.0zM527.6 186.8 v1.0 h1.25 v-1.0zM530.7 186.8 v1.0 h1.25 v-1.0zM533.7 186.8 v1.0 h1.25 v-1.0zM536.8 186.8 v1.4 h1.25 v-1.4zM539.9 186.8 v1.0 h1.25 v-1.0zM542.9 186.8 v1.4 h1.25 v-1.4zM546.0 186.8 v1.8 h1.25 v-1.8zM549.0 186.8 v1.8 h1.25 v-1.8zM491.7 236.2 v-1.4 h1.25 v1.4zM494.8 236.2 v-2.2 h1.25 v2.2zM497.8 236.2 v-1.4 h1.25 v1.4zM500.9 236.2 v-1.4 h1.25 v1.4zM503.9 236.2 v-2.2 h1.25 v2.2zM507.0 236.2 v-2.2 h1.25 v2.2zM510.1 236.2 v-1.8 h1.25 v1.8zM513.1 236.2 v-1.0 h1.25 v1.0zM516.2 236.2 v-1.4 h1.25 v1.4zM519.2 236.2 v-1.4 h1.25 v1.4zM522.3 236.2 v-2.2 h1.25 v2.2zM525.4 236.2 v-2.2 h1.25 v2.2zM528.4 236.2 v-1.4 h1.25 v1.4zM531.5 236.2 v-1.0 h1.25 v1.0zM534.5 236.2 v-1.8 h1.25 v1.8zM537.6 236.2 v-1.4 h1.25 v1.4zM540.7 236.2 v-1.4 h1.25 v1.4zM543.7 236.2 v-1.8 h1.25 v1.8zM546.8 236.2 v-1.0 h1.25 v1.0zM549.8 236.2 v-1.8 h1.25 v1.8z" fill="#fdfcff"/>
<path d="M497.7 187.8 v7 h1.05 v-7zM503.9 187.8 v4 h1.05 v-4zM510.1 187.8 v4 h1.05 v-4zM516.3 187.8 v8 h1.05 v-8zM522.5 187.8 v8 h1.05 v-8zM528.7 187.8 v5 h1.05 v-5zM531.8 187.8 v8 h1.05 v-8zM538.0 187.8 v5 h1.05 v-5zM544.2 187.8 v6 h1.05 v-6zM547.3 187.8 v6 h1.05 v-6zM497.3 235.2 v-9 h1.05 v9zM503.5 235.2 v-6 h1.05 v6zM506.6 235.2 v-5 h1.05 v5zM509.7 235.2 v-9 h1.05 v9zM515.9 235.2 v-5 h1.05 v5zM522.1 235.2 v-4 h1.05 v4zM525.2 235.2 v-7 h1.05 v7zM531.4 235.2 v-6 h1.05 v6zM537.6 235.2 v-6 h1.05 v6zM543.8 235.2 v-4 h1.05 v4zM546.9 235.2 v-9 h1.05 v9z" fill="#cdb9f0"/>
<rect x="552.8" y="202.5" width="64.4" height="34.8" fill="#3f1a98"/>
<path d="M554.4 202.3 v2.2 h1.25 v-2.2zM557.5 202.3 v2.2 h1.25 v-2.2zM560.5 202.3 v2.2 h1.25 v-2.2zM563.6 202.3 v1.0 h1.25 v-1.0zM566.6 202.3 v1.0 h1.25 v-1.0zM569.7 202.3 v1.4 h1.25 v-1.4zM572.8 202.3 v1.0 h1.25 v-1.0zM575.8 202.3 v1.4 h1.25 v-1.4zM578.9 202.3 v1.0 h1.25 v-1.0zM581.9 202.3 v1.0 h1.25 v-1.0zM585.0 202.3 v1.4 h1.25 v-1.4zM588.1 202.3 v1.8 h1.25 v-1.8zM591.1 202.3 v1.4 h1.25 v-1.4zM594.2 202.3 v1.8 h1.25 v-1.8zM597.2 202.3 v2.2 h1.25 v-2.2zM600.3 202.3 v1.8 h1.25 v-1.8zM603.4 202.3 v1.4 h1.25 v-1.4zM606.4 202.3 v2.2 h1.25 v-2.2zM609.5 202.3 v1.0 h1.25 v-1.0zM612.5 202.3 v1.0 h1.25 v-1.0zM615.6 202.3 v1.8 h1.25 v-1.8zM555.2 237.5 v-2.2 h1.25 v2.2zM558.3 237.5 v-1.8 h1.25 v1.8zM561.3 237.5 v-1.0 h1.25 v1.0zM564.4 237.5 v-1.4 h1.25 v1.4zM567.4 237.5 v-2.2 h1.25 v2.2zM570.5 237.5 v-2.2 h1.25 v2.2zM573.6 237.5 v-1.0 h1.25 v1.0zM576.6 237.5 v-1.4 h1.25 v1.4zM579.7 237.5 v-1.4 h1.25 v1.4zM582.7 237.5 v-2.2 h1.25 v2.2zM585.8 237.5 v-1.0 h1.25 v1.0zM588.9 237.5 v-1.4 h1.25 v1.4zM591.9 237.5 v-1.4 h1.25 v1.4zM595.0 237.5 v-1.4 h1.25 v1.4zM598.0 237.5 v-2.2 h1.25 v2.2zM601.1 237.5 v-1.0 h1.25 v1.0zM604.2 237.5 v-2.2 h1.25 v2.2zM607.2 237.5 v-2.2 h1.25 v2.2zM610.3 237.5 v-1.4 h1.25 v1.4zM613.3 237.5 v-1.0 h1.25 v1.0zM616.4 237.5 v-2.2 h1.25 v2.2z" fill="#fdfcff"/>
<path d="M557.3 203.3 v7 h1.05 v-7zM563.5 203.3 v7 h1.05 v-7zM575.9 203.3 v7 h1.05 v-7zM588.3 203.3 v6 h1.05 v-6zM597.6 203.3 v4 h1.05 v-4zM603.8 203.3 v7 h1.05 v-7zM557.5 236.5 v-5 h1.05 v5zM566.8 236.5 v-6 h1.05 v6zM573.0 236.5 v-6 h1.05 v6zM582.3 236.5 v-6 h1.05 v6zM591.6 236.5 v-7 h1.05 v7zM600.9 236.5 v-6 h1.05 v6zM613.3 236.5 v-6 h1.05 v6z" fill="#cdb9f0"/>
<rect x="830" y="166.5" width="65.0" height="36.0" fill="#3f1a98"/>
<path d="M831.6 166.3 v2.2 h1.25 v-2.2zM834.7 166.3 v1.4 h1.25 v-1.4zM837.7 166.3 v1.0 h1.25 v-1.0zM840.8 166.3 v1.8 h1.25 v-1.8zM843.8 166.3 v1.0 h1.25 v-1.0zM846.9 166.3 v1.8 h1.25 v-1.8zM850.0 166.3 v2.2 h1.25 v-2.2zM853.0 166.3 v1.0 h1.25 v-1.0zM856.1 166.3 v1.4 h1.25 v-1.4zM859.1 166.3 v1.4 h1.25 v-1.4zM862.2 166.3 v1.4 h1.25 v-1.4zM865.3 166.3 v2.2 h1.25 v-2.2zM868.3 166.3 v2.2 h1.25 v-2.2zM871.4 166.3 v1.4 h1.25 v-1.4zM874.4 166.3 v1.8 h1.25 v-1.8zM877.5 166.3 v1.0 h1.25 v-1.0zM880.6 166.3 v1.0 h1.25 v-1.0zM883.6 166.3 v2.2 h1.25 v-2.2zM886.7 166.3 v1.0 h1.25 v-1.0zM889.7 166.3 v1.0 h1.25 v-1.0zM892.8 166.3 v1.0 h1.25 v-1.0zM832.4 202.7 v-1.4 h1.25 v1.4zM835.5 202.7 v-1.0 h1.25 v1.0zM838.5 202.7 v-1.0 h1.25 v1.0zM841.6 202.7 v-1.4 h1.25 v1.4zM844.6 202.7 v-1.4 h1.25 v1.4zM847.7 202.7 v-1.8 h1.25 v1.8zM850.8 202.7 v-2.2 h1.25 v2.2zM853.8 202.7 v-1.0 h1.25 v1.0zM856.9 202.7 v-1.8 h1.25 v1.8zM859.9 202.7 v-1.0 h1.25 v1.0zM863.0 202.7 v-1.0 h1.25 v1.0zM866.1 202.7 v-1.0 h1.25 v1.0zM869.1 202.7 v-1.0 h1.25 v1.0zM872.2 202.7 v-1.4 h1.25 v1.4zM875.2 202.7 v-1.0 h1.25 v1.0zM878.3 202.7 v-1.0 h1.25 v1.0zM881.4 202.7 v-1.8 h1.25 v1.8zM884.4 202.7 v-2.2 h1.25 v2.2zM887.5 202.7 v-2.2 h1.25 v2.2zM890.5 202.7 v-1.4 h1.25 v1.4zM893.6 202.7 v-2.2 h1.25 v2.2z" fill="#fdfcff"/>
<path d="M836.4 167.3 v7 h1.05 v-7zM842.6 167.3 v5 h1.05 v-5zM855.0 167.3 v6 h1.05 v-6zM858.1 167.3 v8 h1.05 v-8zM864.3 167.3 v6 h1.05 v-6zM870.5 167.3 v7 h1.05 v-7zM879.8 167.3 v8 h1.05 v-8zM892.2 167.3 v4 h1.05 v-4zM838.2 201.7 v-7 h1.05 v7zM841.3 201.7 v-5 h1.05 v5zM853.7 201.7 v-7 h1.05 v7zM863.0 201.7 v-4 h1.05 v4zM869.2 201.7 v-9 h1.05 v9zM872.3 201.7 v-4 h1.05 v4zM875.4 201.7 v-7 h1.05 v7zM884.7 201.7 v-4 h1.05 v4zM890.9 201.7 v-7 h1.05 v7z" fill="#cdb9f0"/>
<rect x="895" y="169.5" width="66.0" height="48.3" fill="#3f1a98"/>
<path d="M896.6 169.3 v1.4 h1.25 v-1.4zM899.7 169.3 v2.2 h1.25 v-2.2zM902.7 169.3 v1.8 h1.25 v-1.8zM905.8 169.3 v2.2 h1.25 v-2.2zM908.8 169.3 v1.8 h1.25 v-1.8zM911.9 169.3 v2.2 h1.25 v-2.2zM915.0 169.3 v2.2 h1.25 v-2.2zM918.0 169.3 v2.2 h1.25 v-2.2zM921.1 169.3 v2.2 h1.25 v-2.2zM924.1 169.3 v2.2 h1.25 v-2.2zM927.2 169.3 v2.2 h1.25 v-2.2zM930.3 169.3 v2.2 h1.25 v-2.2zM933.3 169.3 v1.8 h1.25 v-1.8zM936.4 169.3 v2.2 h1.25 v-2.2zM939.4 169.3 v1.8 h1.25 v-1.8zM942.5 169.3 v1.8 h1.25 v-1.8zM945.6 169.3 v1.0 h1.25 v-1.0zM948.6 169.3 v1.8 h1.25 v-1.8zM951.7 169.3 v1.4 h1.25 v-1.4zM954.7 169.3 v1.4 h1.25 v-1.4zM957.8 169.3 v1.8 h1.25 v-1.8zM897.4 218.0 v-1.8 h1.25 v1.8zM900.5 218.0 v-1.0 h1.25 v1.0zM903.5 218.0 v-1.4 h1.25 v1.4zM906.6 218.0 v-2.2 h1.25 v2.2zM909.6 218.0 v-2.2 h1.25 v2.2zM912.7 218.0 v-2.2 h1.25 v2.2zM915.8 218.0 v-1.4 h1.25 v1.4zM918.8 218.0 v-1.4 h1.25 v1.4zM921.9 218.0 v-2.2 h1.25 v2.2zM924.9 218.0 v-2.2 h1.25 v2.2zM928.0 218.0 v-1.0 h1.25 v1.0zM931.1 218.0 v-2.2 h1.25 v2.2zM934.1 218.0 v-1.8 h1.25 v1.8zM937.2 218.0 v-1.0 h1.25 v1.0zM940.2 218.0 v-1.8 h1.25 v1.8zM943.3 218.0 v-1.4 h1.25 v1.4zM946.4 218.0 v-1.0 h1.25 v1.0zM949.4 218.0 v-1.4 h1.25 v1.4zM952.5 218.0 v-1.4 h1.25 v1.4zM955.5 218.0 v-1.4 h1.25 v1.4zM958.6 218.0 v-1.0 h1.25 v1.0z" fill="#fdfcff"/>
<path d="M902.2 170.3 v5 h1.05 v-5zM908.4 170.3 v6 h1.05 v-6zM917.7 170.3 v8 h1.05 v-8zM923.9 170.3 v6 h1.05 v-6zM927.0 170.3 v6 h1.05 v-6zM933.2 170.3 v8 h1.05 v-8zM939.4 170.3 v5 h1.05 v-5zM945.6 170.3 v8 h1.05 v-8zM954.9 170.3 v6 h1.05 v-6zM958.0 170.3 v5 h1.05 v-5zM899.6 217.0 v-4 h1.05 v4zM912.0 217.0 v-5 h1.05 v5zM918.2 217.0 v-4 h1.05 v4zM930.6 217.0 v-7 h1.05 v7zM939.9 217.0 v-7 h1.05 v7zM949.2 217.0 v-6 h1.05 v6z" fill="#cdb9f0"/>
<rect x="961" y="175" width="13.3" height="47.5" fill="#3f1a98"/>
<path d="M962.6 174.8 v2.2 h1.25 v-2.2zM965.7 174.8 v2.2 h1.25 v-2.2zM968.7 174.8 v2.2 h1.25 v-2.2zM971.8 174.8 v2.2 h1.25 v-2.2zM963.4 222.7 v-1.8 h1.25 v1.8zM966.5 222.7 v-1.4 h1.25 v1.4zM969.5 222.7 v-1.8 h1.25 v1.8zM972.6 222.7 v-2.2 h1.25 v2.2z" fill="#fdfcff"/>
<path d="M967.5 175.8 v7 h1.05 v-7zM970.6 175.8 v5 h1.05 v-5zM967.1 221.7 v-6 h1.05 v6z" fill="#cdb9f0"/>
<path d="M233 168 L233 161" stroke="#3f1a98" stroke-width="1.4"/>
<path d="M40.3 508.6 L41.8 508.5 L43.3 508.6 L44.8 508.8 L46.3 508.8 L47.8 508.4 L49.3 508.3 L50.8 508.6 L52.3 508.7 L53.8 508.6 L55.3 508.6 L56.8 508.7 L58.3 508.7 L59.8 508.4 L61.3 508.3 L62.8 508.6 L64.3 508.8 L65.8 508.7 L67.3 508.6 L68.8 508.6 L70.3 508.6 L71.8 508.4 L73.3 508.4 L74.8 508.6 L76.3 508.9 L77.8 508.7 L79.3 508.5 L80.8 508.5 L82.3 508.6 L83.8 508.5 L85.3 508.4 L86.8 508.7 L88.3 508.9 L89.8 508.7 L91.3 508.4 L92.8 508.4 L93.0 508.4 L95.0 507.0 L97.0 503.5 L98.5 496.0 L100.0 482.0 L101.5 468.0 L103.5 455.5 L106.0 447.0 L109.0 441.0 L112.0 436.5 L115.5 433.0 L119.5 429.8 L124.0 427.6 L129.0 426.3 L133.0 425.8 L134.5 425.6 L136.0 425.7 L137.5 426.1 L139.0 426.2 L140.5 425.7 L142.0 425.5 L143.5 426.0 L145.0 426.0 L146.5 425.5 L148.0 425.3 L149.5 425.4 L151.0 425.4 L152.5 425.4 L154.0 426.0 L155.5 426.4 L157.0 426.0 L158.5 425.5 L160.0 425.6 L161.5 425.9 L163.0 425.7 L164.5 425.4 L166.0 425.6 L167.5 425.5 L169.0 425.2 L170.5 425.6 L172.0 426.3 L173.5 426.4 L175.0 425.8 L176.5 427.0 L178.5 429.2 L180.5 427.2 L182.5 426.6 L184.5 427.4 L186.3 424.8 L188.3 418.6 L190.3 411.8 L192.3 407.0 L194.0 404.7 L195.4 404.0 L196.2 404.0 L197.0 404.6 L197.8 405.7 L198.6 407.4 L199.4 409.6 L200.2 412.3 L201.0 415.4 L201.8 418.8 L202.6 422.5 L203.4 426.4 L204.2 431.6 L205.0 437.3 L205.8 442.8 L206.6 447.9 L207.4 452.6 L208.2 456.6 L209.0 460.0 L209.8 462.7 L210.6 464.5 L211.4 465.5 L212.2 465.5 L213.0 464.8 L213.8 463.1 L214.6 460.6 L215.4 457.3 L216.2 453.3 L217.0 448.7 L217.8 443.6 L218.6 438.1 L219.4 432.4 L220.2 426.8 L221.0 422.1 L221.8 417.5 L222.6 413.1 L223.4 409.0 L224.2 405.3 L225.0 402.0 L225.8 399.3 L226.6 397.3 L227.4 396.0 L228.2 395.4 L229.0 395.7 L229.8 396.7 L230.6 398.5 L231.4 401.0 L232.2 404.1 L233.0 407.8 L233.8 412.0 L234.6 416.7 L235.4 421.6 L236.2 426.7 L237.0 432.5 L237.8 438.5 L238.6 444.2 L239.4 449.5 L240.2 454.4 L241.0 458.6 L241.8 462.1 L242.6 464.8 L243.4 466.7 L244.2 467.6 L245.0 467.5 L245.8 466.5 L246.6 464.5 L247.4 461.7 L248.2 458.1 L249.0 453.8 L249.8 448.9 L250.6 443.5 L251.4 437.7 L252.2 431.8 L253.0 425.9 L253.8 420.4 L254.6 415.1 L255.4 410.0 L256.2 405.3 L257.0 401.1 L257.8 397.5 L258.6 394.6 L259.4 392.5 L260.2 391.2 L261.0 390.8 L261.8 391.3 L262.6 392.7 L263.4 395.0 L264.2 398.0 L265.0 401.7 L265.8 406.0 L266.6 410.8 L267.4 416.1 L268.2 421.6 L269.0 427.3 L269.8 433.1 L270.6 438.8 L271.4 444.3 L272.2 449.3 L273.0 453.8 L273.8 457.7 L274.6 460.9 L275.4 463.3 L276.2 464.8 L277.0 465.5 L277.8 465.3 L278.6 464.2 L279.4 462.3 L280.2 459.6 L281.0 456.1 L281.8 451.9 L282.6 447.2 L283.4 442.1 L284.2 436.6 L285.0 430.9 L285.8 425.1 L286.6 419.5 L287.4 414.0 L288.2 408.9 L289.0 404.2 L289.8 400.0 L290.6 396.6 L291.4 393.8 L292.2 391.9 L293.0 390.8 L293.8 390.5 L294.6 391.2 L295.4 392.7 L296.2 395.1 L297.0 398.2 L297.8 402.0 L298.6 406.4 L299.4 411.4 L300.2 416.7 L301.0 422.3 L301.8 428.0 L302.6 433.7 L303.4 439.3 L304.2 444.6 L305.0 449.4 L305.8 453.8 L306.6 457.6 L307.4 460.7 L308.2 462.9 L309.0 464.4 L309.8 465.0 L310.6 464.7 L311.4 463.6 L312.2 461.6 L313.0 458.8 L313.8 455.3 L314.6 451.1 L315.4 446.4 L316.2 441.2 L317.0 435.8 L317.8 430.1 L318.6 424.4 L319.4 418.8 L320.2 413.3 L321.0 408.2 L321.8 403.6 L322.6 399.5 L323.4 396.1 L324.2 393.5 L325.0 391.7 L325.8 390.7 L326.6 390.6 L327.4 391.3 L328.2 393.0 L329.0 395.4 L329.8 398.6 L330.6 402.5 L331.4 407.0 L332.2 412.0 L333.0 417.4 L333.8 423.0 L334.6 428.7 L335.4 434.4 L336.2 439.9 L337.0 445.1 L337.8 450.0 L338.6 454.3 L339.4 458.0 L340.2 461.0 L341.0 463.1 L341.8 464.5 L342.6 465.0 L343.4 464.6 L344.2 463.4 L345.0 461.3 L345.8 458.4 L346.6 454.8 L347.4 450.6 L348.2 445.8 L349.0 440.6 L349.8 435.1 L350.6 429.4 L351.4 423.7 L352.2 418.1 L353.0 412.7 L353.8 407.6 L354.6 403.1 L355.4 399.1 L356.2 395.8 L357.0 393.2 L357.8 391.5 L358.6 390.6 L359.4 390.6 L360.2 391.5 L361.0 393.2 L361.8 395.8 L362.6 399.1 L363.4 403.1 L364.2 407.6 L365.0 412.7 L365.8 418.1 L366.6 423.7 L367.4 429.4 L368.2 435.1 L369.0 440.6 L369.8 445.8 L370.6 450.6 L371.4 454.8 L372.2 458.4 L373.0 461.3 L373.8 463.4 L374.6 464.6 L375.4 465.0 L376.2 464.5 L377.0 463.1 L377.8 461.0 L378.6 458.0 L379.4 454.3 L380.2 450.0 L381.0 445.1 L381.8 439.9 L382.6 434.4 L383.4 428.7 L384.2 423.0 L385.0 417.4 L385.8 412.0 L386.6 407.0 L387.4 402.5 L388.2 398.6 L389.0 395.4 L389.8 393.0 L390.6 391.3 L391.4 390.6 L392.2 390.7 L393.0 391.7 L393.8 393.5 L394.6 396.1 L395.4 399.5 L396.2 403.6 L397.0 408.2 L397.8 413.3 L398.6 418.8 L399.4 424.4 L400.2 430.1 L401.0 435.8 L401.8 441.2 L402.6 446.4 L403.4 451.1 L404.2 455.3 L405.0 458.8 L405.8 461.6 L406.6 463.6 L407.4 464.7 L408.2 465.0 L409.0 464.4 L409.8 462.9 L410.6 460.6 L411.4 457.6 L412.2 453.8 L413.0 449.4 L413.8 444.5 L414.6 439.2 L415.4 433.7 L416.2 428.0 L417.0 422.3 L417.8 416.7 L418.6 411.4 L419.4 406.4 L420.2 402.0 L421.0 398.2 L421.8 395.1 L422.6 392.7 L423.4 391.2 L424.2 390.5 L425.0 390.7 L425.8 391.8 L426.6 393.8 L427.4 396.5 L428.2 400.0 L429.0 404.1 L429.8 408.8 L430.6 414.0 L431.4 419.5 L432.2 425.1 L433.0 430.8 L433.8 436.5 L434.6 441.9 L435.4 447.0 L436.2 451.7 L437.0 455.8 L437.8 459.2 L438.6 461.9 L439.4 463.8 L440.2 464.8 L441.0 465.0 L441.8 464.2 L442.6 462.7 L443.4 460.3 L444.2 457.1 L445.0 453.3 L445.8 448.8 L446.6 443.9 L447.4 438.5 L448.2 433.0 L449.0 427.3 L449.8 421.6 L450.6 416.0 L451.4 410.7 L452.2 405.8 L453.0 401.5 L453.8 397.8 L454.6 394.7 L455.4 392.5 L456.2 391.1 L457.0 390.5 L457.8 390.8 L458.6 392.0 L459.4 394.1 L460.2 396.9 L461.0 400.5 L461.8 404.7 L462.6 409.5 L463.4 414.7 L464.2 420.2 L465.0 425.8 L465.8 431.5 L466.6 437.2 L467.4 442.6 L468.2 447.6 L469.0 452.2 L469.8 456.2 L470.6 459.6 L471.4 462.2 L472.2 463.9 L473.0 464.9 L473.8 464.9 L474.6 464.1 L475.4 462.4 L476.2 459.9 L477.0 456.7 L477.8 452.7 L478.6 448.2 L479.4 443.2 L480.2 437.9 L481.0 432.3 L481.8 426.5 L482.6 420.9 L483.4 415.3 L484.2 410.1 L485.0 405.3 L485.8 401.0 L486.6 397.3 L487.4 394.4 L488.2 392.2 L489.0 390.9 L489.8 390.5 L490.6 390.9 L491.4 392.2 L492.2 394.4 L493.0 397.3 L493.8 401.0 L494.6 405.3 L495.4 410.1 L496.2 415.3 L497.0 420.9 L497.8 426.5 L498.6 432.3 L499.4 437.9 L500.2 443.2 L501.0 448.2 L501.8 452.7 L502.6 456.7 L503.4 459.9 L504.2 462.4 L505.0 464.1 L505.8 464.9 L506.6 464.9 L507.4 463.9 L508.2 462.2 L509.0 459.6 L509.8 456.2 L510.6 452.2 L511.4 447.6 L512.2 442.6 L513.0 437.2 L513.8 431.5 L514.6 425.8 L515.4 420.2 L516.2 414.7 L517.0 409.5 L517.8 404.7 L518.6 400.5 L519.4 396.9 L520.2 394.1 L521.0 392.0 L521.8 390.8 L522.6 390.5 L523.4 391.1 L524.2 392.5 L525.0 394.7 L525.8 397.8 L526.6 401.5 L527.4 405.8 L528.2 410.7 L529.0 416.0 L529.8 421.6 L530.6 427.3 L531.4 433.0 L532.2 438.5 L533.0 443.9 L533.8 448.8 L534.6 453.3 L535.4 457.1 L536.2 460.3 L537.0 462.7 L537.8 464.2 L538.6 465.0 L539.4 464.8 L540.2 463.8 L541.0 461.9 L541.8 459.2 L542.6 455.8 L543.4 451.7 L544.2 447.0 L545.0 441.9 L545.8 436.5 L546.6 430.8 L547.4 425.1 L548.2 419.5 L549.0 414.0 L549.8 408.8 L550.6 404.1 L551.4 400.0 L552.2 396.5 L553.0 393.8 L553.8 391.8 L554.6 390.7 L555.4 390.5 L556.2 391.2 L557.0 392.7 L557.8 395.1 L558.6 398.2 L559.4 402.0 L560.2 406.4 L561.0 411.4 L561.8 416.7 L562.6 422.3 L563.4 428.0 L564.2 433.7 L565.0 439.2 L565.8 444.5 L566.6 449.4 L567.4 453.8 L568.2 457.6 L569.0 460.6 L569.8 462.9 L570.6 464.4 L571.4 465.0 L573.5 461.0 L576.0 447.0 L579.0 428.0 L582.0 413.0 L584.5 406.5 L586.5 404.8 L588.5 406.0 L591.0 411.0 L594.0 419.0 L597.0 426.5 L600.0 431.0 L602.6 432.4 L605.0 431.6 L608.0 429.0 L611.0 425.6 L614.0 422.6 L617.0 420.6 L620.5 419.8 L625.0 420.0 L630.0 421.0 L636.0 422.3 L642.0 423.5 L650.0 424.3 L658.0 424.6 L667.0 425.6 L690.0 425.8" fill="none" stroke="#1f1668" stroke-width="1.55" stroke-linejoin="round"/>
<path d="M916.0 425.5 L921.0 425.8 L925.0 426.6 L928.0 426.8 L930.5 425.6 L932.7 424.6 L934.5 427.0 L936.5 432.5 L938.0 435.0 L939.5 431.5 L941.5 421.0 L943.0 414.5 L944.2 412.6 L945.5 414.5 L947.5 421.5 L949.6 426.4 L951.0 423.5 L952.4 413.5 L953.6 398.0 L955.1 376.8 L956.2 363.0 L957.2 353.2" fill="none" stroke="#1f1668" stroke-width="1.55" stroke-linejoin="round"/>
<rect x="12" y="106" width="6" height="5.5" fill="#17173f"/>
<rect x="36.5" y="289.5" width="7.5" height="7.5" fill="#fff" stroke="#222" stroke-width="1"/>
<circle cx="974.4" cy="293.5" r="4.3" fill="#4f867c" stroke="#2f5b53" stroke-width="0.8"/>
<path d="M121.2 243.3 L125 239.3 L129.3 243 L126.8 244.5 L126.8 246.7 L121.6 246.7 Z" fill="#f2e264" stroke="#7a6a18" stroke-width="0.8" stroke-linejoin="round"/>
<rect x="12" y="351" width="5.5" height="5" fill="#17173f"/>
<rect x="37.8" y="522.6" width="5" height="5" fill="#fff" stroke="#222" stroke-width="1"/>
<circle cx="962.3" cy="525.6" r="4.3" fill="#4f867c" stroke="#2f5b53" stroke-width="0.8"/>
<path d="M40.2 480.8 L36.2 484.6 L39.6 487.4" fill="none" stroke="#b9a43a" stroke-width="1.1"/>

</svg>
<div class="t" style="left:27.42px;top:122.83px;font-size:9px;color:#26266c;transform:scaleX(0.8700);">2.0</div>
<div class="t" style="left:27.42px;top:159.33px;font-size:9px;color:#26266c;transform:scaleX(0.8700);">1.2</div>
<div class="t" style="left:27.42px;top:177.58px;font-size:9px;color:#26266c;transform:scaleX(0.8700);">0.8</div>
<div class="t" style="left:27.42px;top:195.83px;font-size:9px;color:#26266c;transform:scaleX(0.8700);">0.4</div>
<div class="t" style="left:27.42px;top:214.08px;font-size:9px;color:#26266c;transform:scaleX(0.8700);">0.0</div>
<div class="t" style="left:24.81px;top:232.33px;font-size:9px;color:#26266c;transform:scaleX(0.8700);">-0.4</div>
<div class="t" style="left:24.81px;top:250.58px;font-size:9px;color:#26266c;transform:scaleX(0.8700);">-0.8</div>
<div class="t" style="left:24.81px;top:268.83px;font-size:9px;color:#26266c;transform:scaleX(0.8700);">-1.2</div>
<div class="t" style="left:24.81px;top:287.08px;font-size:9px;color:#26266c;transform:scaleX(0.8700);">-1.6</div>
<div class="t" style="left:32.78px;top:135.78px;font-size:9px;color:#26266c;transform:scaleX(0.8700);">V</div>
<div class="t" style="left:27.49px;top:297.78px;font-size:9px;color:#1c1c1c;transform:scaleX(0.9100);">-9.081</div>
<div class="t" style="left:123.45px;top:297.78px;font-size:9px;color:#1c1c1c;transform:scaleX(0.9100);">0.919</div>
<div class="t" style="left:216.85px;top:297.78px;font-size:9px;color:#1c1c1c;transform:scaleX(0.9100);">10.92</div>
<div class="t" style="left:310.25px;top:297.78px;font-size:9px;color:#1c1c1c;transform:scaleX(0.9100);">20.92</div>
<div class="t" style="left:403.65px;top:297.78px;font-size:9px;color:#1c1c1c;transform:scaleX(0.9100);">30.92</div>
<div class="t" style="left:497.05px;top:297.78px;font-size:9px;color:#1c1c1c;transform:scaleX(0.9100);">40.92</div>
<div class="t" style="left:590.45px;top:297.78px;font-size:9px;color:#1c1c1c;transform:scaleX(0.9100);">50.92</div>
<div class="t" style="left:683.85px;top:297.78px;font-size:9px;color:#1c1c1c;transform:scaleX(0.9100);">60.92</div>
<div class="t" style="left:777.25px;top:297.78px;font-size:9px;color:#1c1c1c;transform:scaleX(0.9100);">70.92</div>
<div class="t" style="left:870.65px;top:297.78px;font-size:9px;color:#1c1c1c;transform:scaleX(0.9100);">80.92</div>
<div class="t" style="left:964.05px;top:297.78px;font-size:9px;color:#1c1c1c;transform:scaleX(0.9100);">90.92</div>
<div class="t" style="left:17.61px;top:349.28px;font-size:9px;color:#26266c;transform:scaleX(0.8700);">294.5</div>
<div class="t" style="left:17.61px;top:382.74px;font-size:9px;color:#26266c;transform:scaleX(0.8700);">81.48</div>
<div class="t" style="left:19.35px;top:399.62px;font-size:9px;color:#26266c;transform:scaleX(0.8700);">-25.0</div>
<div class="t" style="left:15.00px;top:416.50px;font-size:9px;color:#26266c;transform:scaleX(0.8700);">-131.5</div>
<div class="t" style="left:15.00px;top:433.38px;font-size:9px;color:#26266c;transform:scaleX(0.8700);">-238.0</div>
<div class="t" style="left:15.00px;top:450.26px;font-size:9px;color:#26266c;transform:scaleX(0.8700);">-344.5</div>
<div class="t" style="left:15.00px;top:467.14px;font-size:9px;color:#26266c;transform:scaleX(0.8700);">-450.9</div>
<div class="t" style="left:15.00px;top:484.68px;font-size:9px;color:#26266c;transform:scaleX(0.8700);">-557.4</div>
<div class="t" style="left:15.00px;top:501.58px;font-size:9px;color:#26266c;transform:scaleX(0.8700);">-663.9</div>
<div class="t" style="left:15.00px;top:518.28px;font-size:9px;color:#26266c;transform:scaleX(0.8700);">-770.4</div>
<div class="t" style="left:24.80px;top:361.78px;font-size:9px;color:#26266c;transform:scaleX(0.9481);">mV</div>
<div class="t" style="left:30.05px;top:529.58px;font-size:9px;color:#1c1c1c;transform:scaleX(0.9100);">63.58</div>
<div class="t" style="left:122.25px;top:529.58px;font-size:9px;color:#1c1c1c;transform:scaleX(0.9100);">64.22</div>
<div class="t" style="left:214.45px;top:529.58px;font-size:9px;color:#1c1c1c;transform:scaleX(0.9100);">64.85</div>
<div class="t" style="left:306.65px;top:529.58px;font-size:9px;color:#1c1c1c;transform:scaleX(0.9100);">65.49</div>
<div class="t" style="left:398.85px;top:529.58px;font-size:9px;color:#1c1c1c;transform:scaleX(0.9100);">66.12</div>
<div class="t" style="left:491.05px;top:529.58px;font-size:9px;color:#1c1c1c;transform:scaleX(0.9100);">66.76</div>
<div class="t" style="left:583.25px;top:529.58px;font-size:9px;color:#1c1c1c;transform:scaleX(0.9100);">67.39</div>
<div class="t" style="left:675.45px;top:529.58px;font-size:9px;color:#1c1c1c;transform:scaleX(0.9100);">68.03</div>
<div class="t" style="left:952.05px;top:529.58px;font-size:9px;color:#1c1c1c;transform:scaleX(0.9100);">69.94</div>
<div class="a" style="left:13px;top:307px;width:25px;height:9px;background:#6c6cc2"></div>
<div class="t" style="left:19.50px;top:307.83px;font-size:8px;color:#f4f4ff;transform:scaleX(0.8597);">x1.0</div>
<div class="t" style="left:41.80px;top:310.38px;font-size:9px;color:#2e2e34;transform:scaleX(0.8260);">µs</div>
<div class="a" style="left:13px;top:538.4px;width:25px;height:9px;background:#6c6cc2"></div>
<div class="t" style="left:19.50px;top:539.23px;font-size:8px;color:#f4f4ff;transform:scaleX(0.8597);">x1.0</div>
<div class="t" style="left:41.80px;top:541.78px;font-size:9px;color:#2e2e34;transform:scaleX(0.8260);">µs</div>
<div class="a" style="left:10px;top:552.5px;width:978px;height:13px;background:linear-gradient(#f4f2ea,#fbfaf6 50%,#f1efe6)"></div>
<div class="a" style="left:975.5px;top:348.5px;width:12.5px;height:204px;background:linear-gradient(90deg,#f1efe6,#fbfaf6 50%,#f1efe6)"></div>
<div class="a" style="left:975.5px;top:552px;width:12.5px;height:13.5px;background:#fdfdfb"></div>
<div style="position:absolute;border:1px solid #a3a193;border-radius:2px;background:linear-gradient(#fefefc,#ebe8dc);left:11.8px;top:552.5px;width:12.4px;height:12px"></div>
<div style="position:absolute;border:1px solid #a3a193;border-radius:2px;background:linear-gradient(#fefefc,#ebe8dc);left:962.8px;top:552.5px;width:12.4px;height:12px"></div>
<div style="position:absolute;border:1px solid #a3a193;border-radius:2px;background:linear-gradient(#fefefc,#ebe8dc);left:975.8px;top:349.3px;width:12px;height:12px"></div>
<div style="position:absolute;border:1px solid #a3a193;border-radius:2px;background:linear-gradient(#fefefc,#ebe8dc);left:975.8px;top:540.6px;width:12px;height:12px"></div>
<div style="position:absolute;border:1px solid #a3a193;border-radius:2px;background:linear-gradient(#fefefc,#ebe8dc);left:707px;top:552.5px;width:57.5px;height:12px;border-radius:3px;background:linear-gradient(#fbfaf6,#e7e4d8)"></div>
<div style="position:absolute;border:1px solid #a3a193;border-radius:2px;background:linear-gradient(#fefefc,#ebe8dc);left:975.8px;top:426.3px;width:12px;height:44.5px;border-radius:3px;background:linear-gradient(90deg,#fbfaf6,#e7e4d8)"></div>
<svg class="a" style="left:0;top:345px" width="1000" height="225" viewBox="0 345 1000 225"><g fill="none" stroke="#4a4a4a" stroke-width="0.95"><path d="M20.4 555.8 L16.6 559 L20.4 562.2"/><path d="M967.2 555.8 L971 559 L967.2 562.2"/><path d="M978.6 357.2 L981.8 353.6 L985 357.2"/><path d="M978.6 544.8 L981.8 548.4 L985 544.8"/></g><g stroke="#8a887c" stroke-width="0.9"><path d="M733.6 556 V562 M735.6 556 V562 M737.6 556 V562"/><path d="M978.8 446.6 H984.8 M978.8 448.6 H984.8 M978.8 450.6 H984.8"/></g></svg>
<div class="a" style="left:690.4px;top:380.6px;width:225px;height:157.2px;background:#c2c2c2;border:1px solid #d2d2d2"></div>
<div class="a" style="left:690.4px;top:380.6px;width:225px;height:10.4px;background:#a7a7a7"></div>
<div class="a" style="left:693.2px;top:391px;width:220px;height:143.4px;background:#fefefe"></div>
<div class="t" style="left:693.40px;top:382.20px;font-size:8.5px;color:#ffffff;font-weight:bold;transform:scaleX(0.8721);-webkit-text-stroke:0.25px">Zoom Overview</div>
<svg class="a" style="left:690px;top:380px" width="227" height="159" viewBox="690 380 227 159"><path d="M898 388.2 H901.4" stroke="#fff" stroke-width="1.4"/><path d="M907.2 383.6 L912 388.6 M912 383.6 L907.2 388.6" stroke="#fff" stroke-width="1.5"/><g stroke="#cfcfd6" stroke-width="1" stroke-dasharray="2.4 2"><line x1="696.40" y1="394.9" x2="696.40" y2="531.4"/><line x1="696.4" y1="394.90" x2="909.6" y2="394.90"/><line x1="717.72" y1="394.9" x2="717.72" y2="531.4"/><line x1="696.4" y1="408.55" x2="909.6" y2="408.55"/><line x1="739.04" y1="394.9" x2="739.04" y2="531.4"/><line x1="696.4" y1="422.20" x2="909.6" y2="422.20"/><line x1="760.36" y1="394.9" x2="760.36" y2="531.4"/><line x1="696.4" y1="435.85" x2="909.6" y2="435.85"/><line x1="781.68" y1="394.9" x2="781.68" y2="531.4"/><line x1="696.4" y1="449.50" x2="909.6" y2="449.50"/><line x1="803.00" y1="394.9" x2="803.00" y2="531.4"/><line x1="696.4" y1="463.15" x2="909.6" y2="463.15"/><line x1="824.32" y1="394.9" x2="824.32" y2="531.4"/><line x1="696.4" y1="476.80" x2="909.6" y2="476.80"/><line x1="845.64" y1="394.9" x2="845.64" y2="531.4"/><line x1="696.4" y1="490.45" x2="909.6" y2="490.45"/><line x1="866.96" y1="394.9" x2="866.96" y2="531.4"/><line x1="696.4" y1="504.10" x2="909.6" y2="504.10"/><line x1="888.28" y1="394.9" x2="888.28" y2="531.4"/><line x1="696.4" y1="517.75" x2="909.6" y2="517.75"/><line x1="909.60" y1="394.9" x2="909.60" y2="531.4"/><line x1="696.4" y1="531.40" x2="909.6" y2="531.40"/></g><path d="M696.4 460.3 L706.1 460.3 L706.4 478.3 L715.7 478.3 L716.0 460.3 L717.1 460.3" fill="none" stroke="#2a1670" stroke-width="1"/><path d="M722.6 460.4 L728.0 460.4 L728.4 417.6 L740.3 417.6" fill="none" stroke="#2a1670" stroke-width="1"/><path d="M828.2 460.7 L842.4 460.7 L842.7 478.5 L852.0 478.5 L852.3 460.4 L853.5 460.4" fill="none" stroke="#2a1670" stroke-width="1"/><path d="M859.5 460.7 L864.4 460.7 L864.9 417.7 L876.7 417.7" fill="none" stroke="#2a1670" stroke-width="1"/><rect x="740.4" y="416.8" width="15.1" height="26.0" fill="#36188a"/><rect x="755.0" y="418.1" width="15.3" height="36.7" fill="#36188a"/><rect x="769.8" y="422.6" width="15.0" height="35.6" fill="#36188a"/><rect x="784.4" y="428.1" width="15.0" height="35.9" fill="#36188a"/><rect x="798.9" y="431.6" width="15.0" height="36.7" fill="#36188a"/><rect x="813.4" y="443.2" width="15.3" height="26.1" fill="#36188a"/><rect x="876.7" y="416.2" width="15.3" height="27.0" fill="#36188a"/><rect x="891.5" y="418.5" width="15.6" height="36.2" fill="#36188a"/><rect x="906.6" y="422.6" width="3.5" height="35.6" fill="#36188a"/><rect x="717.2" y="452.9" width="5.9" height="15.4" fill="#36188a"/><rect x="853.7" y="452.9" width="6.2" height="15.6" fill="#36188a"/><path d="M740.4 417.4 V412.1" stroke="#36188a" stroke-width="1"/><rect x="852.3" y="444.2" width="12.6" height="36.6" fill="none" stroke="#6e6e6e" stroke-width="1"/><path d="M714.4 472.2 L716.4 469.6 L718.4 472.2 L716.4 474.8 Z" fill="#fffbe0" stroke="#5c5428" stroke-width="0.8"/></svg>
<div class="a" style="left:7px;top:571px;width:987px;height:20px;background:linear-gradient(#f8f7f1,#ece9dc)"></div>
<div class="t" style="left:14.70px;top:576.36px;font-size:9.5px;color:#111;transform:scaleX(0.9747);">Stopped</div>
<div class="hl" style="left:73px;top:573px;width:18px;height:15.5px;background:#cbdcf2;border-color:#a6bfe2"></div>
<svg class="a" style="left:56px;top:572px" width="40" height="18" viewBox="56 572 40 18"><circle cx="64.5" cy="580.4" r="5.9" fill="#eaf2e2" stroke="#3f7f22" stroke-width="1.5"/><circle cx="64.5" cy="580.4" r="3.9" fill="none" stroke="#7ab35a" stroke-width="1.2"/><path d="M62 579 H65.2 V577.2 L68.6 580.4 L65.2 583.6 V581.8 H62 Z" fill="#fff" stroke="#4d8a2c" stroke-width="0.5"/><circle cx="81.8" cy="580.4" r="6" fill="#cf3a26" stroke="#9c2416" stroke-width="0.9"/><path d="M77 578.6 a6 6 0 0 1 9.6 0" fill="none" stroke="#ea8d7c" stroke-width="1.4"/><rect x="77.6" y="579.2" width="8.4" height="2.6" rx="0.6" fill="#fff"/></svg>
<div class="sep" style="left:92px;top:573px;height:15px"></div>
<div class="t" style="left:97.30px;top:576.36px;font-size:9.5px;color:#111;transform:scaleX(0.9717);">Trigger</div>
<div class="inp" style="left:132px;top:573px;width:59px;height:15px"></div>
<div class="t" style="left:135.60px;top:576.36px;font-size:9.5px;color:#111;transform:scaleX(0.9927);">Auto</div>
<div class="dd" style="left:178px;top:574.3px"><svg width="10" height="10" viewBox="0 0 10 10"><path d="M2.4 3.7 L5 6.4 L7.6 3.7" fill="none" stroke="#505050" stroke-width="0.95"/></svg></div>
<svg class="a" style="left:195px;top:573px" width="16" height="14" viewBox="195 573 16 14"><path d="M196.3 584.6 H199.6 V577.6 H203.8 V584.6 H206.6" fill="none" stroke="#141414" stroke-width="1.3"/><path d="M203.2 578.4 L207.4 575.2" stroke="#141414" stroke-width="1.2"/><rect x="206" y="574" width="3.6" height="3.4" fill="#141414"/></svg>
<div class="sep" style="left:215px;top:573px;height:15px"></div>
<div class="inp" style="left:220px;top:573px;width:58px;height:15px;border-color:#e9e7dd"></div>
<div class="t" style="left:222.60px;top:576.36px;font-size:9.5px;color:#c9c9c9;transform:scaleX(0.8837);">A</div>
<div class="dd dis" style="left:265.2px;top:574.3px"><svg width="10" height="10" viewBox="0 0 10 10"><path d="M2.4 3.7 L5 6.4 L7.6 3.7" fill="none" stroke="#505050" stroke-width="0.95"/></svg></div>
<div class="sep" style="left:282.5px;top:573px;height:15px"></div>
<svg class="a" style="left:286px;top:573px" width="36" height="15" viewBox="286 573 36 15"><path d="M290 585 L298 576 M291 577 L297.5 585.5" stroke="#dcdad0" stroke-width="1.3"/><path d="M296 575.5 l2.8 -0.4 l-0.4 2.8" fill="none" stroke="#dcdad0" stroke-width="1"/><path d="M306 576 L317.5 586 M317 576 L306.5 585.5" stroke="#c5d9ee" stroke-width="1.5"/><path d="M311.8 574.6 V587" stroke="#dbe6f2" stroke-width="1"/></svg>
<div class="sep" style="left:324px;top:573px;height:15px"></div>
<div class="inp" style="left:328.5px;top:573px;width:59.5px;height:15px;border-color:#e9e7dd"></div>
<div class="a" style="left:330px;top:573px;width:43.4px;height:15px;overflow:hidden"><div class="t" style="left:3.70px;top:3.36px;font-size:9.5px;color:#c6c6c6;transform:scaleX(0.9576);">-528.9 mV</div></div>
<div class="sp dis" style="left:375.5px;top:574.3px"><svg width="9" height="10" viewBox="0 0 9 10"><path d="M2.6 3.7 L4.5 2 L6.4 3.7 M2.6 6.3 L4.5 8 L6.4 6.3" fill="none" stroke="#4a4a46" stroke-width="0.9"/><path d="M0 5 H9" stroke="#c9c6ba" stroke-width="0.8"/></svg></div>
<div class="sep" style="left:392.5px;top:573px;height:15px"></div>
<div class="inp" style="left:397.5px;top:573px;width:59px;height:15px"></div>
<div class="t" style="left:401.30px;top:576.36px;font-size:9.5px;color:#111;transform:scaleX(0.8980);">9 %</div>
<div class="sp" style="left:445px;top:574.3px"><svg width="9" height="10" viewBox="0 0 9 10"><path d="M2.6 3.7 L4.5 2 L6.4 3.7 M2.6 6.3 L4.5 8 L6.4 6.3" fill="none" stroke="#4a4a46" stroke-width="0.9"/><path d="M0 5 H9" stroke="#c9c6ba" stroke-width="0.8"/></svg></div>
<svg class="a" style="left:460px;top:573px" width="18" height="15" viewBox="460 573 18 15"><path d="M461.6 581.6 C463.4 574.6,466 574.8,468 579.6 S472.4 586,474.6 580" fill="none" stroke="#181830" stroke-width="1.4"/><path d="M463.4 576.2 H471.4" stroke="#181830" stroke-width="1"/><path d="M473.8 576.2 L470.6 574.2 V578.2 Z" fill="#181830"/></svg>
<div class="inp" style="left:480px;top:573px;width:59px;height:15px;border-color:#e9e7dd"></div>
<div class="t" style="left:483.80px;top:576.36px;font-size:9.5px;color:#cacaca;transform:scaleX(0.8049);">0 s</div>
<div class="sp dis" style="left:527px;top:574.3px"><svg width="9" height="10" viewBox="0 0 9 10"><path d="M2.6 3.7 L4.5 2 L6.4 3.7 M2.6 6.3 L4.5 8 L6.4 6.3" fill="none" stroke="#4a4a46" stroke-width="0.9"/><path d="M0 5 H9" stroke="#c9c6ba" stroke-width="0.8"/></svg></div>
<div class="sep" style="left:543.5px;top:573px;height:15px"></div>
<div class="t" style="left:550.00px;top:576.36px;font-size:9.5px;color:#111;transform:scaleX(0.9740);">Measurements</div>
<svg class="a" style="left:617.3px;top:575px" width="13" height="12" viewBox="0 0 13 12"><rect x="0.6" y="0.6" width="11.6" height="10.6" rx="1" fill="#5d9a3a" stroke="#2f5f1a" stroke-width="1"/><rect x="1.8" y="1.8" width="9.2" height="8.2" fill="none" stroke="#a6d08a" stroke-width="0.9"/><path d="M6.4 2.6 V9.2 M3.1 5.9 H9.7" stroke="#fff" stroke-width="1.8"/></svg>
<svg class="a" opacity="0.28" style="left:635.2px;top:575px" width="13" height="12" viewBox="0 0 13 12"><rect x="0.6" y="0.6" width="11.6" height="10.6" rx="1" fill="#5d9a3a" stroke="#2f5f1a" stroke-width="1"/><rect x="1.8" y="1.8" width="9.2" height="8.2" fill="none" stroke="#a6d08a" stroke-width="0.9"/><rect x="3" y="3.4" width="6.8" height="4.6" fill="#eef5e6"/></svg>
<svg class="a" opacity="0.28" style="left:652.2px;top:575px" width="13" height="12" viewBox="0 0 13 12"><rect x="0.6" y="0.6" width="11.6" height="10.6" rx="1" fill="#5d9a3a" stroke="#2f5f1a" stroke-width="1"/><rect x="1.8" y="1.8" width="9.2" height="8.2" fill="none" stroke="#a6d08a" stroke-width="0.9"/><rect x="3" y="3.4" width="6.8" height="4.6" fill="#eef5e6"/></svg>
<div class="sep" style="left:668.5px;top:573px;height:15px"></div>
<div class="t" style="left:675.00px;top:576.36px;font-size:9.5px;color:#111;transform:scaleX(0.9107);">Rulers</div>
<svg class="a" style="left:705px;top:575px" width="13" height="12" viewBox="0 0 13 12"><rect x="0.6" y="0.6" width="11.6" height="10.6" rx="1" fill="#5d9a3a" stroke="#2f5f1a" stroke-width="1"/><rect x="1.8" y="1.8" width="9.2" height="8.2" fill="none" stroke="#a6d08a" stroke-width="0.9"/><path d="M6.4 3 L9.6 7.6 H3.2 Z" fill="#f3f8ee"/><rect x="3.2" y="8.2" width="6.4" height="1" fill="#d6e8c8"/></svg>
<div class="t" style="left:723.70px;top:576.36px;font-size:9.5px;color:#111;transform:scaleX(0.9590);">Notes</div>
<svg class="a" style="left:753px;top:575px" width="13" height="12" viewBox="0 0 13 12"><rect x="0.6" y="0.6" width="11.6" height="10.6" rx="1" fill="#5d9a3a" stroke="#2f5f1a" stroke-width="1"/><rect x="1.8" y="1.8" width="9.2" height="8.2" fill="none" stroke="#a6d08a" stroke-width="0.9"/><path d="M6.4 3 L9.6 7.6 H3.2 Z" fill="#f3f8ee"/><rect x="3.2" y="8.2" width="6.4" height="1" fill="#d6e8c8"/></svg>
<div class="a" style="left:325px;top:589.5px;width:79px;height:12px;background:#fdfdfd;border:1px solid #767676;border-radius:2px 2px 0 0"></div>
<div class="t" style="left:330.00px;top:591.56px;font-size:9.5px;color:#1a1a1a;transform:scaleX(1.0120);">locate - Shortcut</div>
</body></html>
